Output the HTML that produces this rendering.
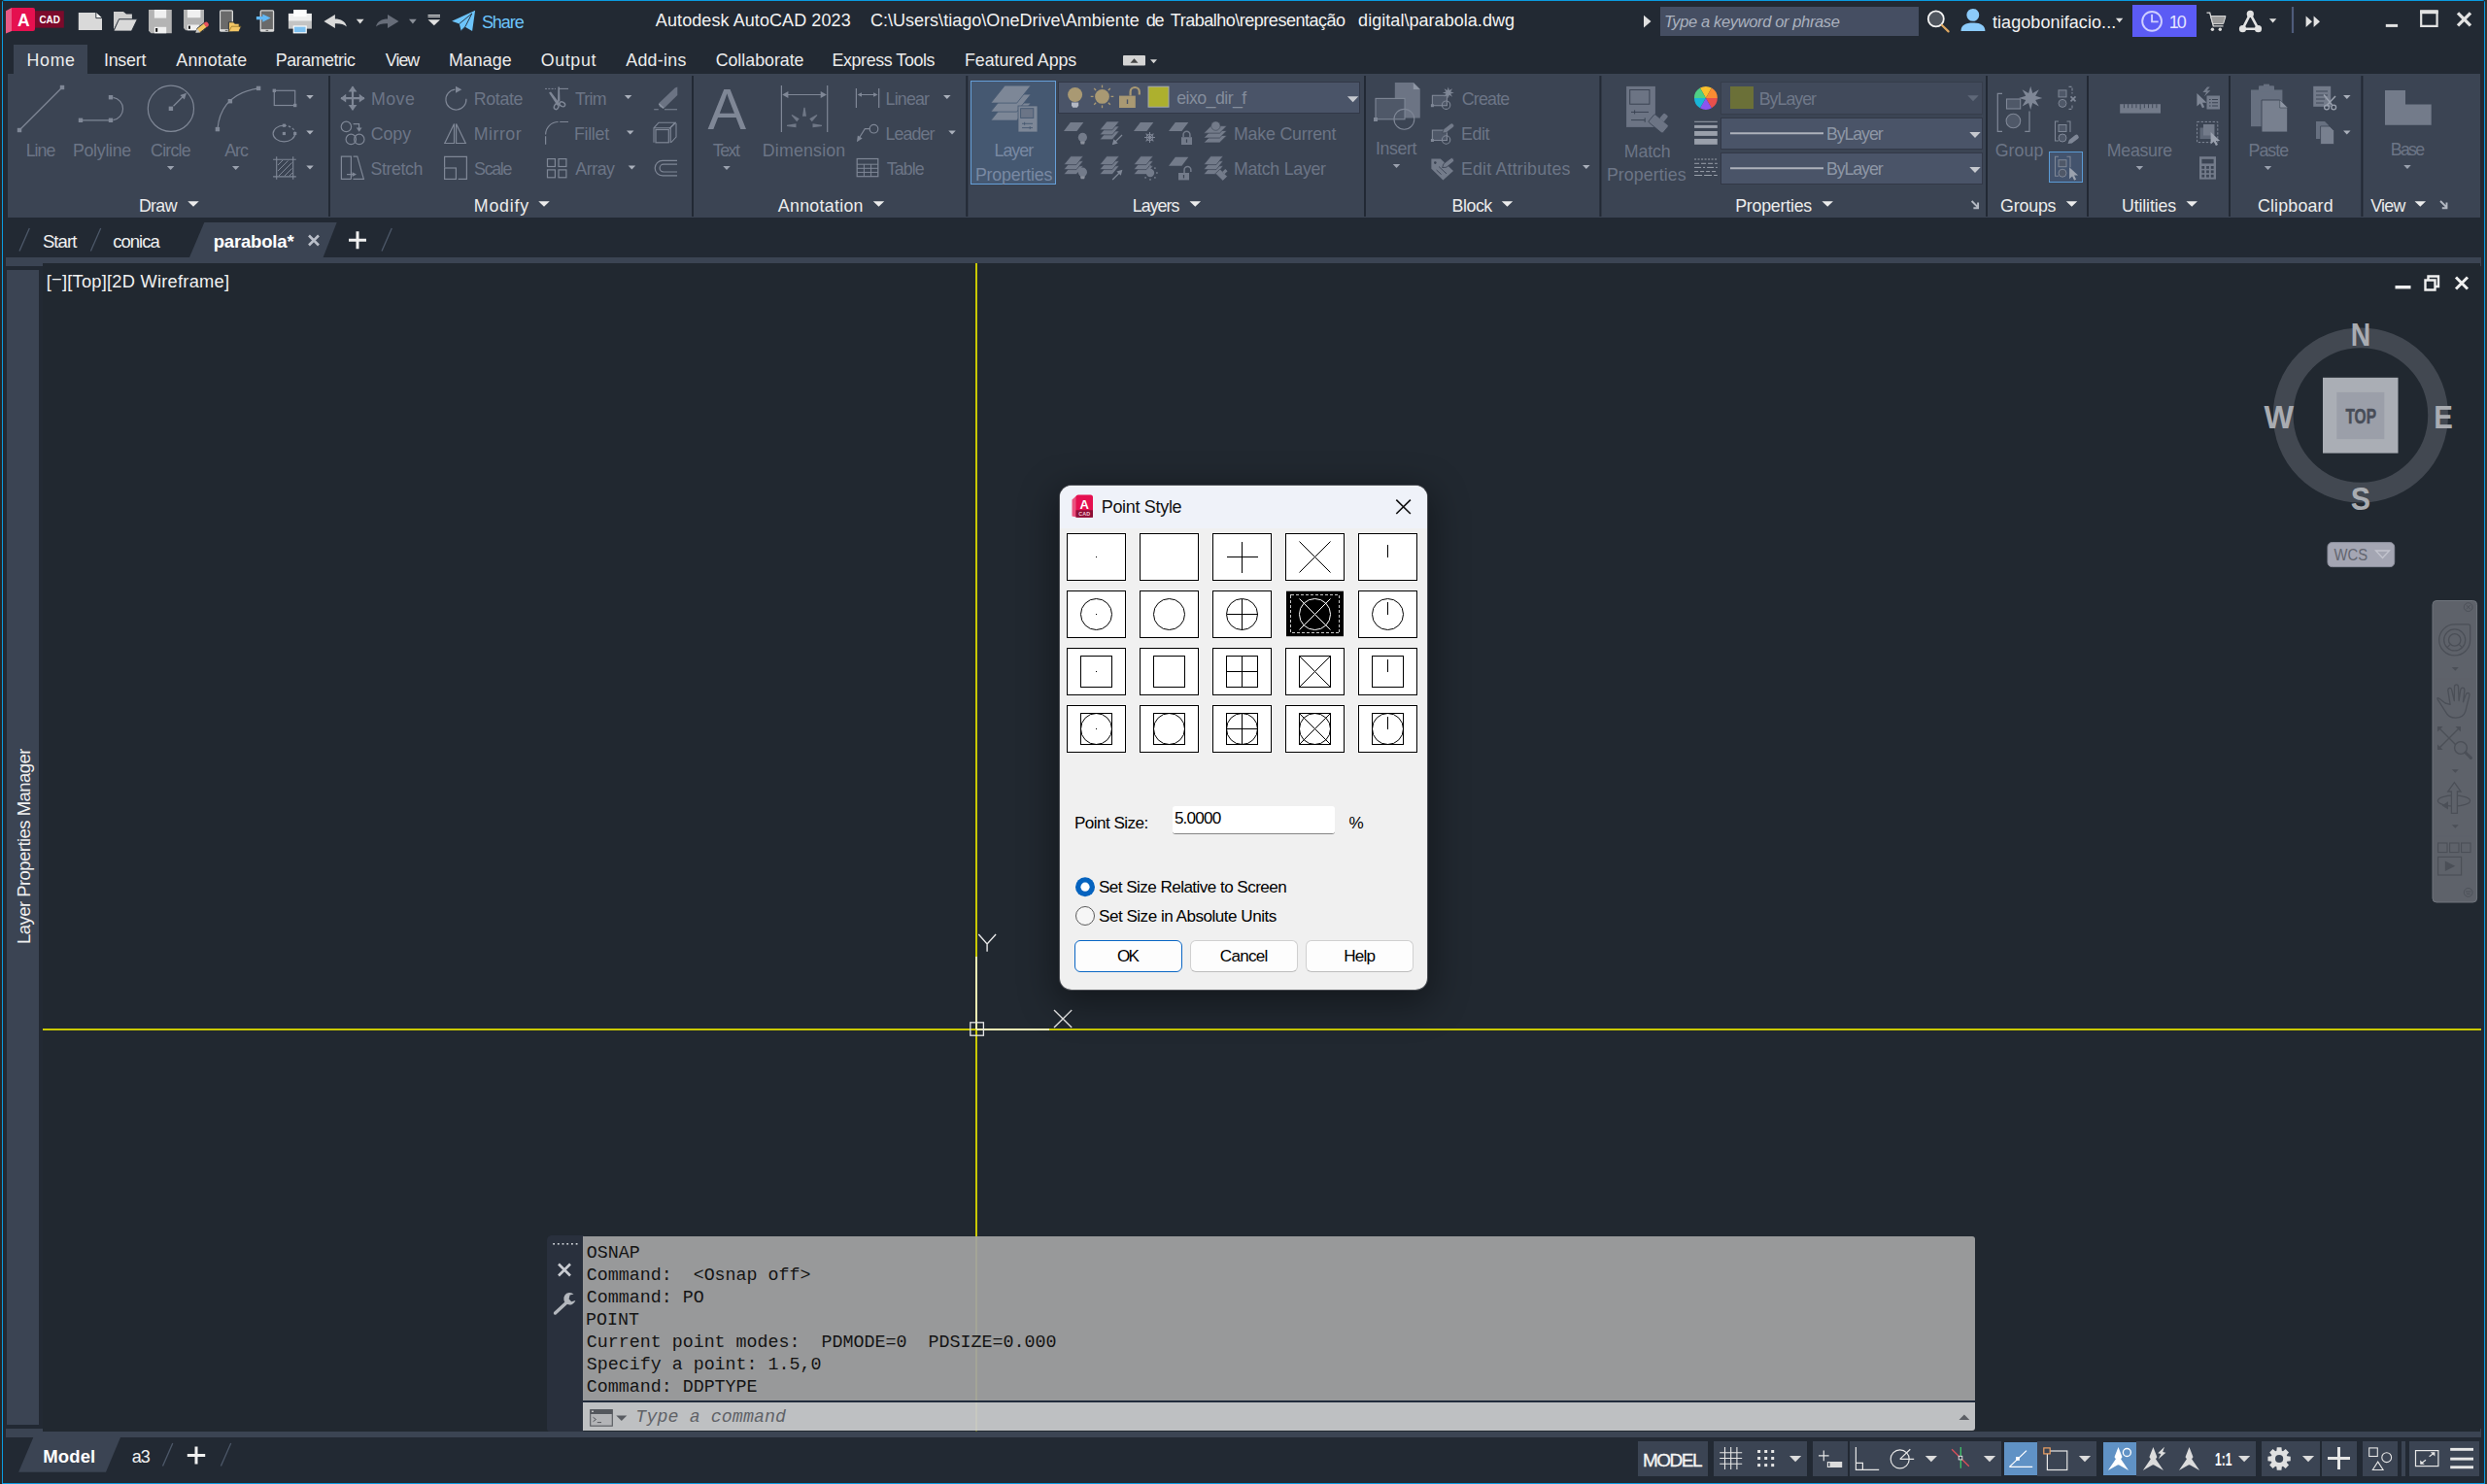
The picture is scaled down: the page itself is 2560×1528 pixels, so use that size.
<!DOCTYPE html>
<html lang="en"><head><meta charset="utf-8"><title>Autodesk AutoCAD 2023 - parabola.dwg</title>
<style>
html,body{margin:0;padding:0;background:#262626;}
body{width:2560px;height:1528px;overflow:hidden;position:relative;font-family:"Liberation Sans",sans-serif;}
#win{position:absolute;left:0;top:0;width:2560px;height:1528px;overflow:hidden;background:#262626;}
#frame{position:absolute;left:1.8px;top:0;width:2556.5px;height:1528px;background:#0a9be0;border-radius:3px 3px 0 0;}
#win:after{content:'';position:absolute;left:2558.3px;top:0;width:2px;height:1528px;background:#38332f;}
.r{position:absolute;}
.t{position:absolute;white-space:nowrap;}
.i{position:absolute;overflow:visible;}
.layer{position:absolute;left:0;top:0;width:2560px;height:1528px;}
svg.full{position:absolute;left:0;top:0;}
.t{z-index:2}
#dialog{z-index:5}
</style></head>
<body>
<div id="win"><div id="frame"></div>
<div class="layer" id="mid">
<div class="r" style="left:3.3px;top:1.2px;width:2553.4px;height:1525.5px;background:#222933;"></div>
<div class="r" style="left:6px;top:265px;width:2548px;height:8.5px;background:#3b4453;"></div>
<div class="r" style="left:6px;top:1471px;width:2548px;height:8.9px;background:#3b4453;"></div>
<div class="r" style="left:44px;top:270.5px;width:2509.4px;height:1203.6px;background:#212830;"></div>
<div class="r" style="left:7px;top:278px;width:33px;height:1189px;background:#3b4453;"></div>
<span class="t" id="t70" style="left:0.00px;top:0px;font-size:18.50px;line-height:18.50px;color:#f0f0f0;transform-origin:0 0;transform:translate(16.2px,972px) rotate(-90deg);left:0;letter-spacing:-0.543px;">Layer Properties Manager</span>
<span class="t" id="t71" style="left:47.69px;top:281.13px;font-size:18.30px;line-height:18.30px;color:#f0f0f0;letter-spacing:0.233px;">[<span style="position:relative;top:-2.2px">−</span>][Top][2D Wireframe]</span>
<svg class="full" width="2560" height="1528" viewBox="0 0 2560 1528">
<rect x="1004" y="271" width="2" height="1202.3" fill="#c9c900"/>
<rect x="44" y="1059" width="2510" height="2" fill="#c9c900"/>
<rect x="1004" y="985" width="2" height="75" fill="#f3f1b4"/>
<rect x="1005" y="1059" width="75" height="2" fill="#f3f1b4"/>
<rect x="998.8" y="1052.8" width="13.6" height="13.4" fill="none" stroke="#e6e6e6" stroke-width="1.3"/>
<path d="M1007.3 962 l8.8 10 l9 -10 M1016.1 972 v7.8" stroke="#e6e6e6" stroke-width="1.4" fill="none"/>
<path d="M1085 1040 l18.2 18 M1103.2 1040 l-18.2 18" stroke="#e6e6e6" stroke-width="1.4" fill="none"/>
<rect x="2465.5" y="294" width="16" height="3.4" fill="#f0f0f0"/>
<path d="M2496.5 288.5 h10 v10 h-10 z M2499.5 288 v-3.5 h10.5 v10.5 h-3.5" fill="none" stroke="#f0f0f0" stroke-width="2.4"/>
<path d="M2528 285.5 l12 12 M2540 285.5 l-12 12" stroke="#f0f0f0" stroke-width="3"/>
<circle cx="2429.9" cy="427.5" r="79.7" fill="none" stroke="#424851" stroke-width="20.8"/>
<rect x="2391" y="388.8" width="77.5" height="77.8" fill="#aaaeb5"/>
<rect x="2405.3" y="403.9" width="49" height="48.2" fill="#9b9fa9"/>
<text x="2430" y="355.9" text-anchor="middle" style="font-family:'Liberation Sans',sans-serif;font-weight:bold;font-size:33px" fill="#a9acb1" textLength="20.5" lengthAdjust="spacingAndGlyphs">N</text>
<text x="2430" y="525.3" text-anchor="middle" style="font-family:'Liberation Sans',sans-serif;font-weight:bold;font-size:32.5px" fill="#a9acb1" textLength="20.3" lengthAdjust="spacingAndGlyphs">S</text>
<text x="2345.8" y="440.6" text-anchor="middle" style="font-family:'Liberation Sans',sans-serif;font-weight:bold;font-size:33px" fill="#a9acb1" textLength="30.6" lengthAdjust="spacingAndGlyphs">W</text>
<text x="2515" y="440.6" text-anchor="middle" style="font-family:'Liberation Sans',sans-serif;font-weight:bold;font-size:33px" fill="#a9acb1" textLength="19.6" lengthAdjust="spacingAndGlyphs">E</text>
<text x="2430.2" y="435.8" text-anchor="middle" style="font-family:'Liberation Sans',sans-serif;font-weight:bold;font-size:21.6px" fill="#484d58" stroke="#484d58" stroke-width="0.5" textLength="31.6" lengthAdjust="spacingAndGlyphs">TOP</text>
<rect x="2396" y="558.6" width="68.7" height="25" rx="4.5" fill="#a4a6b3" stroke="#8e909e" stroke-width="1"/>
<text x="2402.5" y="577" style="font-family:'Liberation Sans',sans-serif;font-size:16px" fill="#62656f" textLength="34.5" lengthAdjust="spacingAndGlyphs">WCS</text>
<path d="M2445.5 567 h14 l-7 7.5 z" fill="none" stroke="#c3c5cf" stroke-width="1.3"/>
<rect x="2504" y="618.5" width="45.6" height="310.5" rx="4" fill="#5e626a" stroke="#70757d" stroke-width="1"/>
<circle cx="2540.7" cy="625.1" r="4.4" fill="#5e626a" stroke="#4b4f57" stroke-width="0.9"/><path d="M2538.6 623 l4.2 4.2 M2542.8 623 l-4.2 4.2" stroke="#4b4f57" stroke-width="0.9"/>
<path d="M2526.7 642.9 h14 a2 2 0 0 1 2 2 v14 a16 16 0 1 1 -16 -16 z" fill="#5e626a" stroke="#4b4f57" stroke-width="1.3"/><circle cx="2526.7" cy="658.9" r="11" fill="none" stroke="#4b4f57" stroke-width="1.3" /><circle cx="2526.7" cy="658.9" r="6.2" fill="none" stroke="#4b4f57" stroke-width="1.3" /><path d="M2522 663.6 l-3.2 3.2 M2531.4 663.6 l3.2 3.2" fill="none" stroke="#4b4f57" stroke-width="1.2" />
<path d="M2523.8 687.1 h7 l-3.5 3.6 z" fill="#4b4f57"/>
<path d="M2523.8 792.2 h7 l-3.5 3.6 z" fill="#4b4f57"/>
<path d="M2523.8 849.2 h7 l-3.5 3.6 z" fill="#4b4f57"/>
<path d="M2507.5 699.3 h38 M2507.5 860.7 h38" stroke="#5e626a" stroke-width="1"/>
<path d="M2517 724 l-6.5 -5 q-2.6 -1 -1 1.6 l8 12.5 q3 6 10 6 q8.4 0 10.4 -7 l4 -16 q0.4 -2.6 -1.6 -2.6 q-1.6 0 -2.4 2.4 l-2.4 7 l1.4 -12.4 q0 -2.4 -2 -2.4 q-1.8 0 -2.2 2.4 l-1.6 11 l-0.6 -14.4 q-0.2 -2.2 -2 -2.2 q-1.9 0 -2 2.2 l-0.2 14.6 l-2.6 -11.4 q-0.6 -2.2 -2.4 -1.8 q-1.8 0.4 -1.4 2.8 l2.2 14 z" fill="#5e626a" stroke="#4b4f57" stroke-width="1.3" stroke-linejoin="round"/>
<path d="M2510 749 l20 20 M2532 749 l-22 22" fill="none" stroke="#4b4f57" stroke-width="1.4" /><path d="M2509 748 h5.6 l-5.6 5.6 z M2533 748 h-5.6 l5.6 5.6 z M2509 772 h5.6 l-5.6 -5.6 z" fill="#4b4f57"/><circle cx="2533" cy="770" r="6.4" fill="#5e626a" stroke="#4b4f57" stroke-width="1.4"/><path d="M2538 775 l5.4 5.4" stroke="#4b4f57" stroke-width="3" stroke-linecap="round"/>
<ellipse cx="2526" cy="824.5" rx="16.6" ry="5.6" fill="none" stroke="#4b4f57" stroke-width="1.3" /><path d="M2523.4 837.4 v-22.4 h-3.6 l6.6 -9.4 l6.6 9.4 h-3.6 v22.4 z" fill="#5e626a" stroke="#4b4f57" stroke-width="1.3"/><path d="M2513.6 829.6 l6.4 -4.4 v8.4 z" fill="#4b4f57"/>
<rect x="2509.6" y="868" width="9.4" height="9.6" fill="#5e626a" stroke="#4b4f57" stroke-width="1.1"/>
<rect x="2521.6" y="868" width="9.4" height="9.6" fill="#5e626a" stroke="#4b4f57" stroke-width="1.1"/>
<rect x="2533.6" y="868" width="9.4" height="9.6" fill="#5e626a" stroke="#4b4f57" stroke-width="1.1"/>
<rect x="2509.6" y="882.4" width="24" height="18.6" fill="#5e626a" stroke="#4b4f57" stroke-width="1.2"/><path d="M2516.8 886.6 v10.4 l10.4 -5.2 z" fill="#4b4f57"/>
<circle cx="2540.7" cy="918.9" r="4.4" fill="#5e626a" stroke="#4b4f57" stroke-width="0.9"/><path d="M2538 918 h5.4 M2538.8 920.4 h3.8" stroke="#4b4f57" stroke-width="0.9"/>
</svg>
</div>
<div class="layer" id="top">
<div class="r" style="left:3.3px;top:1.2px;width:2553.4px;height:74.8px;background:#222933;"></div>
<div class="r" style="left:14px;top:46px;width:76px;height:31px;background:#3b4453;"></div>
<div class="r" style="left:8px;top:76px;width:2545.3px;height:148px;background:#3b4453;"></div>
<div class="r" style="left:3.3px;top:224px;width:2553.4px;height:41px;background:#222933;"></div>
<span class="t" id="t1" style="left:495.89px;top:14.12px;font-size:18.00px;line-height:18.00px;color:#6cc4fb;letter-spacing:-1.024px;">Share</span>
<span class="t" id="t2" style="left:674.86px;top:12.13px;font-size:18.00px;line-height:18.00px;color:#f2f2f2;letter-spacing:0.083px;">Autodesk AutoCAD 2023</span>
<span class="t" id="t3" style="left:895.89px;top:12.13px;font-size:18.00px;line-height:18.00px;color:#f2f2f2;letter-spacing:0.029px;">C:\Users\tiago\OneDrive\Ambiente</span>
<span class="t" id="t4" style="left:1179.69px;top:12.13px;font-size:18.00px;line-height:18.00px;color:#f2f2f2;letter-spacing:-1.090px;">de</span>
<span class="t" id="t5" style="left:1204.81px;top:12.13px;font-size:18.00px;line-height:18.00px;color:#f2f2f2;letter-spacing:-0.486px;">Trabalho\representação</span>
<span class="t" id="t6" style="left:1398.10px;top:12.13px;font-size:18.00px;line-height:18.00px;color:#f2f2f2;letter-spacing:0.042px;">digital\parabola.dwg</span>
<div class="r" style="left:1709px;top:7px;width:266px;height:29.5px;background:#454e62;"></div>
<span class="t" id="t7" style="left:1712.89px;top:14.14px;font-size:16.50px;line-height:16.50px;color:#aab1be;font-style:italic;letter-spacing:-0.369px;">Type a keyword or phrase</span>
<span class="t" id="t8" style="left:2050.97px;top:14.13px;font-size:18.00px;line-height:18.00px;color:#f2f2f2;letter-spacing:0.074px;">tiagobonifacio...</span>
<div class="r" style="left:2195px;top:5.2px;width:65.8px;height:32.8px;background:#5b5bf5;"></div>
<span class="t" id="t9" style="left:2232.84px;top:14.13px;font-size:18.00px;line-height:18.00px;color:#e4e4ff;letter-spacing:-2.043px;">10</span>
<span class="t" id="t10" style="left:27.62px;top:54.13px;font-size:17.80px;line-height:17.80px;color:#ececec;letter-spacing:0.656px;">Home</span>
<span class="t" id="t11" style="left:106.89px;top:54.13px;font-size:17.80px;line-height:17.80px;color:#ececec;letter-spacing:-0.180px;">Insert</span>
<span class="t" id="t12" style="left:181.32px;top:54.13px;font-size:17.80px;line-height:17.80px;color:#ececec;letter-spacing:0.238px;">Annotate</span>
<span class="t" id="t13" style="left:283.74px;top:54.13px;font-size:17.80px;line-height:17.80px;color:#ececec;letter-spacing:-0.412px;">Parametric</span>
<span class="t" id="t14" style="left:396.81px;top:54.13px;font-size:17.80px;line-height:17.80px;color:#ececec;letter-spacing:-0.941px;">View</span>
<span class="t" id="t15" style="left:461.89px;top:54.13px;font-size:17.80px;line-height:17.80px;color:#ececec;letter-spacing:0.120px;">Manage</span>
<span class="t" id="t16" style="left:556.73px;top:54.13px;font-size:17.80px;line-height:17.80px;color:#ececec;letter-spacing:0.652px;">Output</span>
<span class="t" id="t17" style="left:644.32px;top:54.13px;font-size:17.80px;line-height:17.80px;color:#ececec;letter-spacing:0.278px;">Add-ins</span>
<span class="t" id="t18" style="left:736.65px;top:54.13px;font-size:17.80px;line-height:17.80px;color:#ececec;letter-spacing:-0.007px;">Collaborate</span>
<span class="t" id="t19" style="left:856.62px;top:54.13px;font-size:17.80px;line-height:17.80px;color:#ececec;letter-spacing:-0.386px;">Express Tools</span>
<span class="t" id="t20" style="left:992.95px;top:54.13px;font-size:17.80px;line-height:17.80px;color:#ececec;letter-spacing:-0.029px;">Featured Apps</span>
<span class="t" id="t21" style="left:142.89px;top:204.13px;font-size:17.80px;line-height:17.80px;color:#ececec;letter-spacing:-0.633px;">Draw</span>
<span class="t" id="t22" style="left:487.83px;top:204.13px;font-size:17.80px;line-height:17.80px;color:#ececec;letter-spacing:0.783px;">Modify</span>
<span class="t" id="t23" style="left:800.86px;top:204.13px;font-size:17.80px;line-height:17.80px;color:#ececec;letter-spacing:0.292px;">Annotation</span>
<span class="t" id="t24" style="left:1165.74px;top:204.13px;font-size:17.80px;line-height:17.80px;color:#ececec;letter-spacing:-0.930px;">Layers</span>
<span class="t" id="t25" style="left:1494.62px;top:204.13px;font-size:17.80px;line-height:17.80px;color:#ececec;letter-spacing:-0.458px;">Block</span>
<span class="t" id="t26" style="left:1786.14px;top:204.13px;font-size:17.80px;line-height:17.80px;color:#ececec;letter-spacing:-0.217px;">Properties</span>
<span class="t" id="t27" style="left:2059.10px;top:204.13px;font-size:17.80px;line-height:17.80px;color:#ececec;letter-spacing:-0.180px;">Groups</span>
<span class="t" id="t28" style="left:2184.05px;top:204.13px;font-size:17.80px;line-height:17.80px;color:#ececec;letter-spacing:-0.156px;">Utilities</span>
<span class="t" id="t29" style="left:2323.89px;top:204.13px;font-size:17.80px;line-height:17.80px;color:#ececec;letter-spacing:0.200px;">Clipboard</span>
<span class="t" id="t30" style="left:2440.29px;top:204.13px;font-size:17.80px;line-height:17.80px;color:#ececec;letter-spacing:-0.711px;">View</span>
<span class="t" id="t31" style="left:26.74px;top:147.13px;font-size:17.80px;line-height:17.80px;color:#6c7586;letter-spacing:-1.016px;">Line</span>
<span class="t" id="t32" style="left:74.89px;top:147.13px;font-size:17.80px;line-height:17.80px;color:#6c7586;letter-spacing:-0.271px;">Polyline</span>
<span class="t" id="t33" style="left:155.10px;top:147.13px;font-size:17.80px;line-height:17.80px;color:#6c7586;letter-spacing:-0.800px;">Circle</span>
<span class="t" id="t34" style="left:231.32px;top:147.13px;font-size:17.80px;line-height:17.80px;color:#6c7586;letter-spacing:-1.097px;">Arc</span>
<span class="t" id="t35" style="left:381.89px;top:94.13px;font-size:17.80px;line-height:17.80px;color:#6c7586;letter-spacing:0.500px;">Move</span>
<span class="t" id="t36" style="left:381.65px;top:130.13px;font-size:17.80px;line-height:17.80px;color:#6c7586;letter-spacing:-0.021px;">Copy</span>
<span class="t" id="t37" style="left:381.51px;top:166.13px;font-size:17.80px;line-height:17.80px;color:#6c7586;letter-spacing:-0.420px;">Stretch</span>
<span class="t" id="t38" style="left:487.83px;top:94.13px;font-size:17.80px;line-height:17.80px;color:#6c7586;letter-spacing:-0.346px;">Rotate</span>
<span class="t" id="t39" style="left:487.83px;top:130.13px;font-size:17.80px;line-height:17.80px;color:#6c7586;letter-spacing:0.472px;">Mirror</span>
<span class="t" id="t40" style="left:488.10px;top:166.13px;font-size:17.80px;line-height:17.80px;color:#6c7586;letter-spacing:-1.300px;">Scale</span>
<span class="t" id="t41" style="left:591.89px;top:94.13px;font-size:17.80px;line-height:17.80px;color:#6c7586;letter-spacing:-0.771px;">Trim</span>
<span class="t" id="t42" style="left:590.89px;top:130.13px;font-size:17.80px;line-height:17.80px;color:#6c7586;letter-spacing:-0.260px;">Fillet</span>
<span class="t" id="t43" style="left:592.32px;top:166.13px;font-size:17.80px;line-height:17.80px;color:#6c7586;letter-spacing:-0.458px;">Array</span>
<span class="t" id="t44" style="left:733.81px;top:147.13px;font-size:17.80px;line-height:17.80px;color:#6c7586;letter-spacing:-1.512px;">Text</span>
<span class="t" id="t45" style="left:784.83px;top:147.13px;font-size:17.80px;line-height:17.80px;color:#6c7586;letter-spacing:0.171px;">Dimension</span>
<span class="t" id="t46" style="left:911.62px;top:94.13px;font-size:17.80px;line-height:17.80px;color:#6c7586;letter-spacing:-0.808px;">Linear</span>
<span class="t" id="t47" style="left:911.62px;top:130.13px;font-size:17.80px;line-height:17.80px;color:#6c7586;letter-spacing:-0.908px;">Leader</span>
<span class="t" id="t48" style="left:912.68px;top:166.13px;font-size:17.80px;line-height:17.80px;color:#6c7586;letter-spacing:-0.898px;">Table</span>
<span class="t" id="t49" style="left:1269.95px;top:130.13px;font-size:17.80px;line-height:17.80px;color:#6c7586;letter-spacing:-0.195px;">Make Current</span>
<span class="t" id="t50" style="left:1269.95px;top:166.13px;font-size:17.80px;line-height:17.80px;color:#6c7586;letter-spacing:-0.275px;">Match Layer</span>
<span class="t" id="t51" style="left:1415.89px;top:145.13px;font-size:17.80px;line-height:17.80px;color:#6c7586;letter-spacing:-0.380px;">Insert</span>
<span class="t" id="t52" style="left:1504.65px;top:94.13px;font-size:17.80px;line-height:17.80px;color:#6c7586;letter-spacing:-0.753px;">Create</span>
<span class="t" id="t53" style="left:1503.89px;top:130.14px;font-size:17.80px;line-height:17.80px;color:#6c7586;letter-spacing:-0.333px;">Edit</span>
<span class="t" id="t54" style="left:1503.89px;top:166.13px;font-size:17.80px;line-height:17.80px;color:#6c7586;letter-spacing:0.199px;">Edit Attributes</span>
<span class="t" id="t55" style="left:1671.83px;top:148.13px;font-size:17.80px;line-height:17.80px;color:#6c7586;letter-spacing:-0.165px;">Match</span>
<span class="t" id="t56" style="left:1653.89px;top:172.13px;font-size:17.80px;line-height:17.80px;color:#6c7586;letter-spacing:0.067px;">Properties</span>
<span class="t" id="t57" style="left:2053.68px;top:147.13px;font-size:17.80px;line-height:17.80px;color:#6c7586;letter-spacing:0.099px;">Group</span>
<span class="t" id="t58" style="left:2168.83px;top:147.13px;font-size:17.80px;line-height:17.80px;color:#6c7586;letter-spacing:-0.307px;">Measure</span>
<span class="t" id="t59" style="left:2314.62px;top:147.13px;font-size:17.80px;line-height:17.80px;color:#6c7586;letter-spacing:-1.008px;">Paste</span>
<span class="t" id="t60" style="left:2460.74px;top:146.13px;font-size:17.80px;line-height:17.80px;color:#6c7586;letter-spacing:-1.683px;">Base</span>
<div class="r" style="left:998.6px;top:82.6px;width:88.4px;height:107.2px;background:#455871;border:1.4px solid #669fd8;box-sizing:border-box;"></div>
<span class="t" id="t61" style="left:1023.62px;top:147.13px;font-size:17.80px;line-height:17.80px;color:#7989a3;letter-spacing:-1.010px;">Layer</span>
<span class="t" id="t62" style="left:1003.89px;top:172.13px;font-size:17.80px;line-height:17.80px;color:#7989a3;letter-spacing:-0.167px;">Properties</span>
<div class="r" style="left:1089.4px;top:83.8px;width:311px;height:33.6px;background:#4a5468;border:1.8px solid #323847;box-sizing:border-box;"></div>
<span class="t" id="t63" style="left:1211.17px;top:93.12px;font-size:17.80px;line-height:17.80px;color:#848d9c;letter-spacing:-0.553px;">eixo_dir_f</span>
<div class="r" style="left:1771.2px;top:83.8px;width:269.6px;height:34px;background:#414a5b;border:1.6px solid #363d4b;box-sizing:border-box;"></div>
<div class="r" style="left:1771.2px;top:120.6px;width:269.6px;height:33.4px;background:#4a5468;border:1.8px solid #323847;box-sizing:border-box;"></div>
<div class="r" style="left:1771.2px;top:156.6px;width:269.6px;height:33.4px;background:#4a5468;border:1.8px solid #323847;box-sizing:border-box;"></div>
<span class="t" id="t64" style="left:1810.74px;top:94.13px;font-size:17.80px;line-height:17.80px;color:#6f7889;letter-spacing:-0.994px;">ByLayer</span>
<span class="t" id="t65" style="left:1879.95px;top:130.13px;font-size:17.80px;line-height:17.80px;color:#8d96a5;letter-spacing:-1.094px;">ByLayer</span>
<span class="t" id="t66" style="left:1879.95px;top:166.13px;font-size:17.80px;line-height:17.80px;color:#8d96a5;letter-spacing:-1.094px;">ByLayer</span>
<div class="r" style="left:2109px;top:156px;width:34.6px;height:32px;background:#43536d;border:1.5px solid #5b9bd5;box-sizing:border-box;"></div>
<span class="t" id="t67" style="left:43.89px;top:240.13px;font-size:18.50px;line-height:18.50px;color:#f0f0f0;letter-spacing:-0.875px;">Start</span>
<span class="t" id="t68" style="left:116.29px;top:240.13px;font-size:18.50px;line-height:18.50px;color:#f0f0f0;letter-spacing:-0.998px;">conica</span>
<span class="t" id="t69" style="left:219.69px;top:240.13px;font-size:18.50px;line-height:18.50px;color:#ffffff;font-weight:bold;letter-spacing:-0.175px;">parabola*</span>
<svg class="full" width="2560" height="1528" viewBox="0 0 2560 1528">
<rect x="338" y="78" width="2" height="145" fill="#222934"/>
<rect x="712" y="78" width="2" height="145" fill="#222934"/>
<rect x="994.3" y="78" width="2" height="145" fill="#222934"/>
<rect x="1404" y="78" width="2" height="145" fill="#222934"/>
<rect x="1646.4" y="78" width="2" height="145" fill="#222934"/>
<rect x="2044" y="78" width="2" height="145" fill="#222934"/>
<rect x="2148" y="78" width="2" height="145" fill="#222934"/>
<rect x="2294" y="78" width="2" height="145" fill="#222934"/>
<rect x="2430.4" y="78" width="2" height="145" fill="#222934"/>
<path d="M193.25 207.25 h11.5 l-5.75 5.5 z" fill="#ececec"/>
<path d="M554.25 207.25 h11.5 l-5.75 5.5 z" fill="#ececec"/>
<path d="M898.75 207.25 h11.5 l-5.75 5.5 z" fill="#ececec"/>
<path d="M1224.55 207.25 h11.5 l-5.75 5.5 z" fill="#ececec"/>
<path d="M1545.75 207.25 h11.5 l-5.75 5.5 z" fill="#ececec"/>
<path d="M1875.45 207.25 h11.5 l-5.75 5.5 z" fill="#ececec"/>
<path d="M2126.75 207.25 h11.5 l-5.75 5.5 z" fill="#ececec"/>
<path d="M2250.45 207.25 h11.5 l-5.75 5.5 z" fill="#ececec"/>
<path d="M2485.55 207.25 h11.5 l-5.75 5.5 z" fill="#ececec"/>
<path d="M2029.6 207 l6.4 6.4 M2037 214.2 h-5.6 M2036.1 214.2 v-5.6" stroke="#b4b9c3" stroke-width="1.9" fill="none"/>
<path d="M2512 207 l6.4 6.4 M2519.4 214.2 h-5.6 M2518.5 214.2 v-5.6" stroke="#b4b9c3" stroke-width="1.9" fill="none"/>
<path d="M171.85 171 h7.5 l-3.75 4 z" fill="#9aa1ae"/>
<path d="M238.95 171 h7.5 l-3.75 4 z" fill="#9aa1ae"/>
<path d="M744.25 171 h7.5 l-3.75 4 z" fill="#9aa1ae"/>
<path d="M1433.75 169 h7.5 l-3.75 4 z" fill="#9aa1ae"/>
<path d="M2198.65 171 h7.5 l-3.75 4 z" fill="#9aa1ae"/>
<path d="M2330.75 171 h7.5 l-3.75 4 z" fill="#9aa1ae"/>
<path d="M2474.25 170 h7.5 l-3.75 4 z" fill="#9aa1ae"/>
<path d="M315.25 98 h7.5 l-3.75 4 z" fill="#aab0bb"/>
<path d="M315.25 134.5 h7.5 l-3.75 4 z" fill="#aab0bb"/>
<path d="M315.25 170.5 h7.5 l-3.75 4 z" fill="#aab0bb"/>
<path d="M642.85 98 h7.5 l-3.75 4 z" fill="#aab0bb"/>
<path d="M644.95 134.5 h7.5 l-3.75 4 z" fill="#aab0bb"/>
<path d="M646.65 170.5 h7.5 l-3.75 4 z" fill="#aab0bb"/>
<path d="M971.05 98 h7.5 l-3.75 4 z" fill="#aab0bb"/>
<path d="M976.25 134.5 h7.5 l-3.75 4 z" fill="#aab0bb"/>
<path d="M1629.05 170 h7.5 l-3.75 4 z" fill="#aab0bb"/>
<path d="M2412.05 98 h7.5 l-3.75 4 z" fill="#aab0bb"/>
<path d="M2412.05 134.5 h7.5 l-3.75 4 z" fill="#aab0bb"/>
<path d="M1386.9 99.2 h11.4 l-5.7 6 z" fill="#c6c9cf"/>
<rect x="1182" y="89" width="21" height="21" fill="#adb02e"/>
<rect x="1781" y="89" width="24" height="23" fill="#6b7038"/>
<path d="M1781 137.2 h96 M1781 173.2 h96" stroke="#adb1ba" stroke-width="1.9"/>
<path d="M2025.3 98.2 h11.4 l-5.7 6 z" fill="#5f6878"/>
<path d="M2027.3 136 h11.4 l-5.7 6 z" fill="#c6c9cf"/>
<path d="M2027.3 172 h11.4 l-5.7 6 z" fill="#c6c9cf"/>
<polygon points="195,265 210.3,229 346.7,229 332.6,265" fill="#3b4453"/>
<path d="M20 258.5 l10.3 -23.5" stroke="#4d5869" stroke-width="1.3"/>
<path d="M93.4 258.5 l10.3 -23.5" stroke="#4d5869" stroke-width="1.3"/>
<path d="M393 258.5 l10.3 -23.5" stroke="#4d5869" stroke-width="1.3"/>
<path d="M318 242.5 l10 10 M328 242.5 l-10 10" stroke="#b9bec8" stroke-width="2.6"/>
<path d="M359 247.2 h18 M368 238.2 v18" stroke="#f0f0f0" stroke-width="3"/>
<polygon points="12,8 6,11.3 6,34.6 12,32" fill="#ea5a86"/>
<path d="M12 8 h22 a2 2 0 0 1 2 2 v20 a2 2 0 0 1 -2 2 h-22 z" fill="#e5104f"/>
<rect x="36" y="11.2" width="29.8" height="17.4" fill="#7c0a2b"/>
<text x="24.3" y="26.9" text-anchor="middle" style="font-family:'Liberation Sans',sans-serif;font-weight:bold;font-size:19.2px" fill="#fff" textLength="12.6" lengthAdjust="spacingAndGlyphs">A</text>
<text x="40.4" y="24" style="font-family:'Liberation Sans',sans-serif;font-weight:bold;font-size:11px" fill="#fff" textLength="21.4" lengthAdjust="spacingAndGlyphs">CAD</text>
<path d="M80.8 12.9 h18 l6.2 5.7 v12.4 h-24.2 z" fill="#d9d9d9"/>
<path d="M98.8 12.9 v5.7 h6.2" fill="#f4f4f4" stroke="#222933" stroke-width="0.9"/>
<path d="M117 12 h10 l3 2.6 h5.9 v5 h-13.5 l-5.4 11 z" fill="#cfcfcf"/>
<path d="M122.5 19.8 h18.8 l-5.9 12.2 h-18.4 z" fill="#d9d9d9" stroke="#222933" stroke-width="0.8"/>
<path d="M153 10 h23.8 v24.3 h-21.3 l-2.5 -2.5 z" fill="#b4b4b4"/>
<rect x="158.9" y="10" width="12.3" height="8.6" fill="#f0f0f0"/>
<rect x="158.9" y="27.8" width="12.3" height="6.5" fill="#f0f0f0"/>
<rect x="160.2" y="29" width="2" height="3.8" fill="#111"/>
<path d="M189 10 h21 v21.3 h-18.8 l-2.2 -2.2 z" fill="#b4b4b4"/>
<rect x="192.9" y="10" width="13.5" height="8.2" fill="#f0f0f0"/>
<rect x="192.9" y="25.5" width="12" height="5.8" fill="#f0f0f0"/>
<rect x="194" y="26.6" width="1.9" height="3.2" fill="#111"/>
<g transform="translate(201.3,33.8) rotate(-38)"><path d="M0 0 l4 -2.6 h9 v5.2 h-9 z" fill="#f3c561" stroke="#222933" stroke-width="0.8"/><path d="M0 0 l4 -2.6 v5.2 z" fill="#c8c8c8"/><path d="M12.4 -2.6 h1.5 a2.4 2.6 0 0 1 0 5.2 h-1.5 z" fill="#e8525c"/></g>
<rect x="226" y="10.3" width="14" height="22.5" rx="1.6" fill="#d9d9d9"/>
<rect x="227.1" y="11.5" width="11.6" height="18.6" fill="#6a6a6a"/>
<rect x="231.8" y="30.9" width="2.6" height="0.9" fill="#555"/>
<path d="M235.4 22.8 h5 l1.2 1.4 h4.6 v3 h2.2 l-2.6 5.6 h-10.4 z" fill="#f4c765" stroke="#222933" stroke-width="0.9"/>
<path d="M235.6 32.6 l2.8 -5.4 h9.8" fill="none" stroke="#8a6a20" stroke-width="0.7"/>
<rect x="267.6" y="10.3" width="14.6" height="22.5" rx="1.6" fill="#d9d9d9"/>
<rect x="268.9" y="11.5" width="12" height="18.6" fill="#6a6a6a"/>
<rect x="273.6" y="30.9" width="2.6" height="0.9" fill="#555"/>
<path d="M263.9 17 h6.4 v-2.6 l8.3 4.2 l-8.3 4.2 v-2.6 h-6.4 z" fill="#62b8f6"/>
<rect x="302.1" y="10" width="13.6" height="7.5" fill="#fdfdfd"/>
<rect x="296.9" y="13.9" width="24" height="8" fill="#efefef"/>
<rect x="302.1" y="13.9" width="13.6" height="3.2" fill="#fdfdfd"/>
<rect x="296.9" y="21.9" width="24" height="7.7" fill="#c4c4c4"/>
<rect x="302.3" y="27" width="12.9" height="6.8" fill="#7ec1f1" stroke="#fdfdfd" stroke-width="1.2"/>
<path d="M333.4 22 l11.5 -7 v4.6 c6 0 10.6 2.4 12 7.9 c-3 -2.8 -6.6 -3.5 -12 -3.3 v4.9 z" fill="#dadada"/>
<path d="M366.8 19.8 h7.8 l-3.9 4.6 z" fill="#dadada"/>
<path d="M410.5 22 l-11.5 -7 v4.6 c-6 0 -10.6 2.4 -12 7.9 c3 -2.8 6.6 -3.5 12 -3.3 v4.9 z" fill="#676d79"/>
<path d="M421 19.8 h7.8 l-3.9 4.6 z" fill="#8a8f98"/>
<rect x="440.5" y="15" width="12.5" height="0.9" fill="#e6e6e6"/><rect x="440.5" y="16.7" width="12.5" height="1.1" fill="#e6e6e6"/>
<path d="M440.55 20.2 h12.5 l-6.25 6 z" fill="#e0e0e0"/>
<path d="M465.1 21.8 l24 -11 l-3 21.2 l-7.3 -4.3 l-4.1 4 l-1.9 -7.2 z" fill="#6cc4fb"/>
<path d="M472.8 24.5 l13 -10.6 M478.8 27.7 l7 -13.8 M474.7 31.7 l4.1 -4" stroke="#222933" stroke-width="0.9" fill="none"/>
<path d="M1692 15.8 l7.5 6.3 l-7.5 6.3 z" fill="#e0e0e0"/>
<circle cx="1992.8" cy="19.4" r="8" fill="#50565f" stroke="#f4f4f4" stroke-width="1.8"/>
<path d="M1999 26 l6.6 6.4" stroke="#dfa862" stroke-width="2.2" stroke-linecap="round"/>
<circle cx="2030.8" cy="15.4" r="6.4" fill="#8ccbfa"/>
<path d="M2018.5 31.9 c0 -6 5 -8.4 12.4 -8.4 s12.5 2.4 12.5 8.4 z" fill="#8ccbfa"/>
<path d="M2177.9 18.8 h7.4 l-3.7 4.4 z" fill="#e0e0e0"/>
<circle cx="2215.1" cy="21.9" r="9.9" fill="none" stroke="#cfcfff" stroke-width="1.9"/>
<path d="M2215.1 14.8 v7.6 h6.6" fill="none" stroke="#cfcfff" stroke-width="1.9"/>
<path d="M2271.5 13.2 h3.2 l3.6 13.6 h10.2" fill="none" stroke="#dcdcdc" stroke-width="1.3"/>
<path d="M2275.6 16.6 h15.4 l-2.4 8 h-10.8 z" fill="#9b9b9b" stroke="#dcdcdc" stroke-width="1"/>
<circle cx="2277.4" cy="30.3" r="1.7" fill="#dcdcdc"/><circle cx="2285.3" cy="30.3" r="1.7" fill="#dcdcdc"/>
<path d="M2316.3 14.4 L2308.5 29.7 H2324.5 Z" fill="none" stroke="#e2e2e2" stroke-width="2.6" stroke-linejoin="round"/>
<circle cx="2316.3" cy="14.4" r="3.6" fill="#e2e2e2"/>
<circle cx="2308.5" cy="29.7" r="3.6" fill="#e2e2e2"/>
<circle cx="2324.5" cy="29.7" r="3.6" fill="#e2e2e2"/>
<path d="M2335.9 19.2 h7.4 l-3.7 4.4 z" fill="#e0e0e0"/>
<rect x="2358.9" y="7" width="2.2" height="27" fill="#4e5b7a"/>
<path d="M2373.6 16.5 l6.4 5.7 l-6.4 5.7 z M2381.6 16.5 l6.4 5.7 l-6.4 5.7 z" fill="#e2e2e2"/>
<rect x="2455.8" y="24.9" width="12.3" height="3" fill="#e2e2e2"/>
<path d="M2492.2 12 h16.4 v14.8 h-16.4 z" fill="none" stroke="#e2e2e2" stroke-width="2.2"/><rect x="2491.1" y="10.2" width="18.6" height="4" fill="#e2e2e2"/>
<path d="M2530 13.4 l13 13 M2543 13.4 l-13 13" stroke="#e2e2e2" stroke-width="3.3"/>
<rect x="1156" y="57" width="23" height="10.4" rx="1" fill="#d4d4d4"/><path d="M1163.5 64.8 l4 -4.6 l4 4.6 z" fill="#444"/>
<path d="M1184 61.3 h7 l-3.5 4 z" fill="#d4d4d4"/>
<path d="M20 134 L64 90" fill="none" stroke="#7f8796" stroke-width="1.2" />
<rect x="17.8" y="131.8" width="4.4" height="4.4" fill="#7f8796"/>
<rect x="61.8" y="87.8" width="4.4" height="4.4" fill="#7f8796"/>
<path d="M83 123.8 H114 M116.5 123.6 a12.3 11.8 0 0 0 0 -23.2" fill="none" stroke="#7f8796" stroke-width="1.2" />
<rect x="80.8" y="121.6" width="4.4" height="4.4" fill="#7f8796"/>
<rect x="111.8" y="121.6" width="4.4" height="4.4" fill="#7f8796"/>
<rect x="111.8" y="98" width="4.4" height="4.4" fill="#7f8796"/>
<circle cx="175.9" cy="111.8" r="23.6" fill="none" stroke="#7f8796" stroke-width="1.2" />
<rect x="173.7" y="109.6" width="4.4" height="4.4" fill="#7f8796"/>
<path d="M178.5 109.2 L188.5 99.3" fill="none" stroke="#7f8796" stroke-width="1.2" /><path d="M192 95.8 l-6.6 2.2 l4.4 4.4 z" fill="#7f8796"/>
<path d="M223.9 133.1 Q227 97 266.1 90.9" fill="none" stroke="#7f8796" stroke-width="1.2" />
<rect x="221.7" y="130.9" width="4.4" height="4.4" fill="#7f8796"/>
<rect x="234.7" y="102" width="4.4" height="4.4" fill="#7f8796"/>
<rect x="263.9" y="88.7" width="4.4" height="4.4" fill="#7f8796"/>
<rect x="282.3" y="93.3" width="21.4" height="15.2" fill="none" stroke="#7f8796" stroke-width="1.2" />
<rect x="280.6" y="91.6" width="3.4" height="3.4" fill="#7f8796"/>
<rect x="302" y="106.8" width="3.4" height="3.4" fill="#7f8796"/>
<path d="M303.7 137.5 a11.3 8.3 0 1 1 -11.3 -8.3" fill="none" stroke="#7f8796" stroke-width="1.2" /><path d="M292.4 129.2 a11.3 8.3 0 0 1 11.3 8.3" fill="none" stroke="#7f8796" stroke-width="1.2" stroke-dasharray="2.5 2"/>
<rect x="290.8" y="127.6" width="3.2" height="3.2" fill="#7f8796"/>
<rect x="290.8" y="135.9" width="3.2" height="3.2" fill="#7f8796"/>
<rect x="302.1" y="135.9" width="3.2" height="3.2" fill="#7f8796"/>
<path d="M284.7 161.2 V184.8 M301.7 161.2 V184.8 M281.1 164.3 H304.8 M281.1 181.9 H304.8" fill="none" stroke="#7f8796" stroke-width="1.1" />
<path d="M286 170 l5 -5 M286 176 l10.5 -10.5 M287 181 l13.5 -13.5 M293 181 l7.5 -7.5 M298 181 l3 -3" fill="none" stroke="#7f8796" stroke-width="1" />
<path d="M351 101.2 h24 M363 89.2 v24" fill="none" stroke="#7f8796" stroke-width="2.2" />
<path d="M363 88.6 l-4.4 5.8 h8.8 z M363 113.8 l-4.4 -5.8 h8.8 z M350.4 101.2 l5.8 -4.4 v8.8 z M375.6 101.2 l-5.8 -4.4 v8.8 z" fill="#7f8796"/>
<circle cx="356.4" cy="130.4" r="5.2" fill="none" stroke="#7f8796" stroke-width="1.2" /><circle cx="361.3" cy="143.4" r="5.2" fill="none" stroke="#7f8796" stroke-width="1.2" /><circle cx="369.8" cy="143.4" r="5.2" fill="none" stroke="#7f8796" stroke-width="1.2" />
<path d="M363.6 127.6 h6 v4.5" fill="none" stroke="#7f8796" stroke-width="1.2" /><path d="M366.8 131.6 h5.8 l-2.9 4.2 z" fill="#7f8796"/>
<path d="M361.4 184.4 h-10 v-23.2 h10 v23.2 M363.6 161.2 h4.2 l6.6 23.2 h-11" fill="none" stroke="#7f8796" stroke-width="1.2" />
<path d="M357 179.6 h6" fill="none" stroke="#7f8796" stroke-width="1.2" /><path d="M362.6 177.3 l4.4 2.3 l-4.4 2.3 z" fill="#7f8796"/>
<path d="M468.4 92.1 a10.5 10.5 0 1 0 11.5 9.7" fill="none" stroke="#7f8796" stroke-width="1.2" /><path d="M469 88.8 l6.3 3.4 l-6.3 3.6 z" fill="#7f8796"/>
<path d="M467.5 127.6 L457.8 147.5 H467.5 Z M469.6 127.6 V147.5 H479.3 Z" fill="none" stroke="#7f8796" stroke-width="1.2" />
<path d="M457.6 172.6 V161.4 H480.4 V184.4 H471.6" fill="none" stroke="#7f8796" stroke-width="1.2" /><rect x="457.6" y="173" width="11.8" height="11.4" fill="none" stroke="#7f8796" stroke-width="1.2" />
<path d="M561 91.4 h11" fill="none" stroke="#7f8796" stroke-width="1" stroke-dasharray="2 1.3"/><path d="M576 91.4 h9" fill="none" stroke="#7f8796" stroke-width="1.1" />
<path d="M565 95.5 l2 -1 l9.5 12.5 l-2.6 2 z M574.4 89.5 l1.6 0 l0.4 14 l-2.4 3 z" fill="#7f8796"/>
<ellipse cx="572.7" cy="109.7" rx="2.2" ry="3" transform="rotate(25 572.7 109.7)" fill="none" stroke="#7f8796" stroke-width="1.4" /><ellipse cx="578.8" cy="107.3" rx="2.2" ry="3" transform="rotate(-60 578.8 107.3)" fill="none" stroke="#7f8796" stroke-width="1.4" />
<path d="M561.6 138.5 A13 13 0 0 1 574.6 125.5 M576.2 125.5 H585 M561.6 140.3 V148.7" fill="none" stroke="#7f8796" stroke-width="1.2" />
<rect x="563.5" y="163.6" width="7.9" height="7.9" fill="none" stroke="#7f8796" stroke-width="1.2" />
<rect x="563.5" y="174.9" width="7.9" height="7.9" fill="none" stroke="#7f8796" stroke-width="1.2" />
<rect x="575" y="163.6" width="7.9" height="7.9" fill="none" stroke="#7f8796" stroke-width="1.2" />
<rect x="575" y="174.9" width="7.9" height="7.9" fill="none" stroke="#7f8796" stroke-width="1.2" />
<path d="M679 110 l-1 -3.4 l16.8 -16.2 l2.5 -1 v8.6 l-13.8 13.4 z" fill="#6b7383"/><path d="M678.4 107 l4.6 4.3" stroke="#8b93a1" stroke-width="1.6"/>
<path d="M673.2 112.7 h4.6 M684 112.7 h13" fill="none" stroke="#7f8796" stroke-width="1.1" />
<rect x="675" y="133.5" width="13.3" height="13.3" fill="none" stroke="#7f8796" stroke-width="1.2" /><path d="M673 146.8 v-15 l5 -5.6 h17 l-6 6.3 M696 127 v14 l-5.5 6" fill="none" stroke="#7f8796" stroke-width="1.1" /><path d="M673.3 131.7 H690 L695.8 126.4 M690.3 131.8 V147" fill="none" stroke="#7f8796" stroke-width="1.1" />
<path d="M697 165.3 H682 a7.8 7.8 0 0 0 0 15.6 H697 M697 169.2 H683 a3.9 3.9 0 0 0 0 7.8 H697" fill="none" stroke="#7f8796" stroke-width="1.2" />
<text x="748.4" y="132.9" text-anchor="middle" style="font-family:'Liberation Sans',sans-serif;font-size:58.5px" fill="#7f8796" textLength="39.6" lengthAdjust="spacingAndGlyphs">A</text>
<path d="M804.4 88 V136 M851.7 88 V136 M810 97.5 H846" fill="none" stroke="#7f8796" stroke-width="1.2" />
<path d="M805.2 97.5 l6.2 -3.4 v6.8 z M850.9 97.5 l-6.2 -3.4 v6.8 z" fill="#7f8796"/>
<g transform="translate(828,129.3) rotate(-90)"><path d="M9.5 -2 L18.5 -0.6 V0.6 L9.5 2 Z" fill="#6f7786"/></g>
<g transform="translate(828,129.3) rotate(-40)"><path d="M8.5 -2 L17 -0.6 V0.6 L8.5 2 Z" fill="#6f7786"/></g>
<g transform="translate(828,129.3) rotate(-140)"><path d="M8.5 -2 L17 -0.6 V0.6 L8.5 2 Z" fill="#6f7786"/></g>
<g transform="translate(828,129.3) rotate(0)"><path d="M8.5 -2 L18 -0.6 V0.6 L8.5 2 Z" fill="#6f7786"/></g>
<g transform="translate(828,129.3) rotate(180)"><path d="M8.5 -2 L18 -0.6 V0.6 L8.5 2 Z" fill="#6f7786"/></g>
<path d="M881.4 91 V111 M904.7 91 V111 M886 97.5 H900" fill="none" stroke="#7f8796" stroke-width="1.2" />
<path d="M882.6 97.5 l4.4 -2.3 v4.6 z M903.5 97.5 l-4.4 -2.3 v4.6 z" fill="#7f8796"/>
<circle cx="899.5" cy="132.7" r="4.3" fill="none" stroke="#7f8796" stroke-width="1.2" /><path d="M895.2 132.7 H890.3 L884.4 142" fill="none" stroke="#7f8796" stroke-width="1.2" /><path d="M881.9 146.2 l1 -6.6 l4.8 3 z" fill="#7f8796"/>
<rect x="882.2" y="163.5" width="21.6" height="18.2" fill="none" stroke="#7f8796" stroke-width="1.2" /><path d="M882.2 169.2 H903.8 M882.2 173.3 H903.8 M882.2 177.4 H903.8 M889.4 169.2 V181.7 M896.6 169.2 V181.7" fill="none" stroke="#7f8796" stroke-width="1" />
<polygon points="1034.3,106.1 1061.1,106.1 1046.7,124.1 1019.9,124.1" fill="#7d8797" stroke="#455871" stroke-width="0.8"/>
<polygon points="1034.3,97.1 1061.1,97.1 1046.7,115.1 1019.9,115.1" fill="#7d8797" stroke="#455871" stroke-width="0.8"/>
<polygon points="1034.3,88.1 1061.1,88.1 1046.7,106.1 1019.9,106.1" fill="#7d8797" stroke="#455871" stroke-width="0.8"/>
<rect x="1048" y="109" width="20" height="27" fill="#7d8797" stroke="#455871" stroke-width="0.8"/>
<rect x="1050.6" y="111.7" width="13.2" height="9.7" fill="#6b7587" stroke="#455871" stroke-width="0.9"/>
<path d="M1052 127.3 h11 M1052 131.6 h11 M1054.6 125.8 v3 M1060.2 130.1 v3" stroke="#455871" stroke-width="0.9"/>
<circle cx="1106.6" cy="97.5" r="7.5" fill="#a99973"/><path d="M1103 105.6 h7.2 v3.2 l-1.4 2 h-4.4 l-1.4 -2 z" fill="#b3b8c3"/>
<circle cx="1134.5" cy="99.4" r="7.4" fill="#a99973"/>
<path d="M1143.5 99.4 L1146.3 99.4" stroke="#a99973" stroke-width="1.3"/>
<path d="M1140.86 105.764 L1142.84 107.744" stroke="#a99973" stroke-width="1.3"/>
<path d="M1134.5 108.4 L1134.5 111.2" stroke="#a99973" stroke-width="1.3"/>
<path d="M1128.14 105.764 L1126.16 107.744" stroke="#a99973" stroke-width="1.3"/>
<path d="M1125.5 99.4 L1122.7 99.4" stroke="#a99973" stroke-width="1.3"/>
<path d="M1128.14 93.036 L1126.16 91.0561" stroke="#a99973" stroke-width="1.3"/>
<path d="M1134.5 90.4 L1134.5 87.6" stroke="#a99973" stroke-width="1.3"/>
<path d="M1140.86 93.036 L1142.84 91.0561" stroke="#a99973" stroke-width="1.3"/>
<rect x="1152" y="98.6" width="16.8" height="12.4" fill="#a99973"/><rect x="1159.8" y="102.4" width="1.4" height="4.6" fill="#4a5468"/>
<path d="M1163.6 98.6 v-4 a4.6 4.6 0 0 1 9.2 0 v3" fill="none" stroke="#a99973" stroke-width="2.2"/>
<rect x="1182" y="89.2" width="21" height="21" fill="none" stroke="#a3a8b0" stroke-width="1"/>
<polygon points="1101.8,126 1115.3,126 1108.5,135 1095,135" fill="#737b8a"/>
<circle cx="1114.4" cy="141.4" r="4.6" fill="#737b8a"/><path d="M1111.87 145.54 h5.06 l-0.8 3 h-3.46 z" fill="#8a909c"/>
<polygon points="1139.2,135 1152.2,135 1145,143.82 1132,143.82" fill="#737b8a" stroke="#3b4453" stroke-width="0.7"/><polygon points="1139.2,130 1152.2,130 1145,138.82 1132,138.82" fill="#737b8a" stroke="#3b4453" stroke-width="0.7"/><polygon points="1139.2,125 1152.2,125 1145,133.82 1132,133.82" fill="#737b8a" stroke="#3b4453" stroke-width="0.7"/>
<path d="M1155 139 l-7.5 7.5" fill="none" stroke="#7f8796" stroke-width="1.2" /><path d="M1144.8 149.2 l1.6 -6 l4.4 4.4 z" fill="#7f8796"/>
<polygon points="1173.8,126 1187.3,126 1180.5,135 1167,135" fill="#737b8a"/>
<path d="M1178 141.5 h11" transform="rotate(0 1183.5 141.5)" fill="none" stroke="#7f8796" stroke-width="1" />
<path d="M1178 141.5 h11" transform="rotate(45 1183.5 141.5)" fill="none" stroke="#7f8796" stroke-width="1" />
<path d="M1178 141.5 h11" transform="rotate(90 1183.5 141.5)" fill="none" stroke="#7f8796" stroke-width="1" />
<path d="M1178 141.5 h11" transform="rotate(135 1183.5 141.5)" fill="none" stroke="#7f8796" stroke-width="1" />
<circle cx="1183.5" cy="141.5" r="3.4" fill="none" stroke="#7f8796" stroke-width="0.9" />
<polygon points="1209.8,126 1223.3,126 1216.5,135 1203,135" fill="#737b8a"/>
<rect x="1216" y="141.2" width="11" height="7.8" fill="#737b8a"/><rect x="1220.9" y="143.4" width="1.2" height="3.4" fill="#3b4453"/><path d="M1218.1 141.2 v-2.6 a3.4 3.4 0 0 1 6.8 0 v2.6" fill="none" stroke="#737b8a" stroke-width="1.5" />
<polygon points="1246.6,139.4 1263,139.4 1255.4,146.96 1239,146.96" fill="#737b8a" stroke="#3b4453" stroke-width="0.7"/><polygon points="1246.6,134.5 1263,134.5 1255.4,142.06 1239,142.06" fill="#737b8a" stroke="#3b4453" stroke-width="0.7"/><polygon points="1246.6,129.6 1263,129.6 1255.4,137.16 1239,137.16" fill="#737b8a" stroke="#3b4453" stroke-width="0.7"/>
<circle cx="1251.4" cy="129.6" r="4.7" fill="#737b8a" stroke="#3b4453" stroke-width="0.6"/>
<polygon points="1102.2,170.8 1115.2,170.8 1108,179.62 1095,179.62" fill="#737b8a" stroke="#3b4453" stroke-width="0.7"/><polygon points="1102.2,165.8 1115.2,165.8 1108,174.62 1095,174.62" fill="#737b8a" stroke="#3b4453" stroke-width="0.7"/><polygon points="1102.2,160.8 1115.2,160.8 1108,169.62 1095,169.62" fill="#737b8a" stroke="#3b4453" stroke-width="0.7"/>
<circle cx="1114.4" cy="177.2" r="4.6" fill="#737b8a"/><path d="M1111.87 181.34 h5.06 l-0.8 3 h-3.46 z" fill="#8a909c"/>
<polygon points="1139.2,170.8 1152.2,170.8 1145,179.62 1132,179.62" fill="#737b8a" stroke="#3b4453" stroke-width="0.7"/><polygon points="1139.2,165.8 1152.2,165.8 1145,174.62 1132,174.62" fill="#737b8a" stroke="#3b4453" stroke-width="0.7"/><polygon points="1139.2,160.8 1152.2,160.8 1145,169.62 1132,169.62" fill="#737b8a" stroke="#3b4453" stroke-width="0.7"/>
<path d="M1145.2 185 l7.5 -7.5" fill="none" stroke="#7f8796" stroke-width="1.2" /><path d="M1155.4 174.8 l-1.6 6 l-4.4 -4.4 z" fill="#7f8796"/>
<polygon points="1174.2,170.8 1187.2,170.8 1180,179.62 1167,179.62" fill="#737b8a" stroke="#3b4453" stroke-width="0.7"/><polygon points="1174.2,165.8 1187.2,165.8 1180,174.62 1167,174.62" fill="#737b8a" stroke="#3b4453" stroke-width="0.7"/><polygon points="1174.2,160.8 1187.2,160.8 1180,169.62 1167,169.62" fill="#737b8a" stroke="#3b4453" stroke-width="0.7"/>
<circle cx="1184" cy="178" r="4.2" fill="#737b8a"/>
<rect x="1190.1" y="177.2" width="1.6" height="1.6" fill="#737b8a"/>
<rect x="1188.08" y="182.079" width="1.6" height="1.6" fill="#737b8a"/>
<rect x="1183.2" y="184.1" width="1.6" height="1.6" fill="#737b8a"/>
<rect x="1178.32" y="182.079" width="1.6" height="1.6" fill="#737b8a"/>
<rect x="1176.3" y="177.2" width="1.6" height="1.6" fill="#737b8a"/>
<rect x="1178.32" y="172.321" width="1.6" height="1.6" fill="#737b8a"/>
<rect x="1183.2" y="170.3" width="1.6" height="1.6" fill="#737b8a"/>
<rect x="1188.08" y="172.321" width="1.6" height="1.6" fill="#737b8a"/>
<polygon points="1209.8,161.8 1223.3,161.8 1216.5,170.8 1203,170.8" fill="#737b8a"/>
<rect x="1213" y="178" width="11" height="7.4" fill="#737b8a"/><rect x="1217.9" y="180" width="1.2" height="3.4" fill="#3b4453"/><path d="M1219.05 178 v-3 a3.4 3.4 0 0 1 6.8 0 v2" fill="none" stroke="#737b8a" stroke-width="1.5" />
<polygon points="1246.2,170.8 1259.2,170.8 1252,179.62 1239,179.62" fill="#737b8a" stroke="#3b4453" stroke-width="0.7"/><polygon points="1246.2,165.8 1259.2,165.8 1252,174.62 1239,174.62" fill="#737b8a" stroke="#3b4453" stroke-width="0.7"/><polygon points="1246.2,160.8 1259.2,160.8 1252,169.62 1239,169.62" fill="#737b8a" stroke="#3b4453" stroke-width="0.7"/>
<g transform="translate(1257.5,180) rotate(45)"><rect x="-5.4" y="-3" width="10.8" height="6.6" fill="#737b8a" stroke="#3b4453" stroke-width="0.7"/><rect x="-1.6" y="-7" width="3.2" height="4.4" fill="#737b8a"/></g>
<path d="M1435.8 85 h19 l7 7 v29.6 h-26 z" fill="#6c7484"/><path d="M1454.8 85 v7 h7" fill="#8e96a4"/>
<rect x="1416" y="101.4" width="30" height="21.4" fill="#4f5868" stroke="#7f8796" stroke-width="1.1"/>
<circle cx="1445.4" cy="122.8" r="10.4" fill="none" stroke="#7f8796" stroke-width="1.1" />
<rect x="1414" y="121" width="4" height="4" fill="#7f8796"/>
<rect x="1474.4" y="98.3" width="15" height="10.4" fill="#4f5868" stroke="#7f8796" stroke-width="1.1"/>
<circle cx="1488.6" cy="108.2" r="4.2" fill="none" stroke="#7f8796" stroke-width="1.1" />
<rect x="1472.9" y="107.2" width="3" height="3" fill="#7f8796"/>
<polygon points="1496.8,95.4 1493.2,96.395 1495.04,99.6426 1491.79,97.8021 1490.8,101.4 1489.81,97.8021 1486.56,99.6426 1488.4,96.395 1484.8,95.4 1488.4,94.405 1486.56,91.1574 1489.81,92.9979 1490.8,89.4 1491.79,92.9979 1495.04,91.1574 1493.2,94.405" fill="#7f8796"/>
<rect x="1474.4" y="134.1" width="15" height="10.4" fill="#4f5868" stroke="#7f8796" stroke-width="1.1"/>
<circle cx="1488.6" cy="144" r="4.2" fill="none" stroke="#7f8796" stroke-width="1.1" />
<rect x="1472.9" y="143" width="3" height="3" fill="#7f8796"/>
<g transform="translate(1484.6,137) rotate(-38)"><path d="M0 0 l3.6 -2.3 h9 a2 2.3 0 0 1 0 4.6 h-9 z" fill="#737b8a" stroke="#3b4453" stroke-width="0.6"/></g>
<path d="M1473.4 163.6 h9.4 l13.2 12.4 l-10.6 9.4 l-12 -11.6 z" fill="#737b8a"/><circle cx="1477.3" cy="167.6" r="1.3" fill="#3b4453"/>
<path d="M1481 171.5 l8 7.4 M1478.6 175 l5 4.6" stroke="#3b4453" stroke-width="0.9"/>
<g transform="translate(1484.6,172.6) rotate(-38)"><path d="M0 0 l3.6 -2.3 h9 a2 2.3 0 0 1 0 4.6 h-9 z" fill="#737b8a" stroke="#3b4453" stroke-width="0.8"/></g>
<rect x="1674.1" y="88.9" width="29.8" height="42" fill="#6c7484"/>
<rect x="1677.7" y="92.5" width="20.2" height="14.7" fill="#6c7484" stroke="#3b4453" stroke-width="1"/>
<path d="M1679 115.4 h18 M1679 123.6 h14 M1682.6 113.4 v4 M1693.2 121.4 v4.4" stroke="#3b4453" stroke-width="1"/>
<g transform="translate(1708,126.5) rotate(40)"><rect x="-9.5" y="-4" width="19" height="10.5" rx="1.5" fill="#6c7484" stroke="#3b4453" stroke-width="0.8"/><rect x="-2.8" y="-11" width="5.6" height="7.5" rx="1.2" fill="#6c7484"/></g>
<path d="M1755.9 100.9 L1749.95 90.5943 A11.9 11.9 0 0 1 1761.85 90.5943 Z" fill="#fbc02d"/>
<path d="M1755.9 100.9 L1761.85 90.5943 A11.9 11.9 0 0 1 1767.8 100.9 Z" fill="#fb8c32"/>
<path d="M1755.9 100.9 L1767.8 100.9 A11.9 11.9 0 0 1 1761.85 111.206 Z" fill="#e8504c"/>
<path d="M1755.9 100.9 L1761.85 111.206 A11.9 11.9 0 0 1 1749.95 111.206 Z" fill="#8b55f0"/>
<path d="M1755.9 100.9 L1749.95 111.206 A11.9 11.9 0 0 1 1744 100.9 Z" fill="#19b6d8"/>
<path d="M1755.9 100.9 L1744 100.9 A11.9 11.9 0 0 1 1749.95 90.5943 Z" fill="#4fcf85"/>
<rect x="1744.1" y="124.8" width="23.7" height="1" fill="#9aa0ab"/><rect x="1744.1" y="128.9" width="23.7" height="3" fill="#9aa0ab"/><rect x="1744.1" y="135" width="23.7" height="4.9" fill="#9aa0ab"/><rect x="1744.1" y="142.9" width="23.7" height="5.9" fill="#9aa0ab"/>
<path d="M1744.1 164 h23.7" stroke="#9aa0ab" stroke-width="1" stroke-dasharray="2 1.5"/>
<path d="M1744.1 168.3 h23.7" stroke="#9aa0ab" stroke-width="1" stroke-dasharray="5 2"/>
<path d="M1744.1 172.4 h23.7" stroke="#9aa0ab" stroke-width="1" stroke-dasharray="7 2 2 2"/>
<path d="M1744.1 176.6 h23.7" stroke="#9aa0ab" stroke-width="1" stroke-dasharray="4 2"/>
<path d="M1744.1 180.5 h23.7" stroke="#9aa0ab" stroke-width="1" stroke-dasharray="8 2"/>
<path d="M2061 96.3 h-4.7 v39 h4.7 M2084.3 135.3 h4.7 v-20.8" fill="none" stroke="#7f8796" stroke-width="1.2" />
<rect x="2065.5" y="102" width="14.2" height="10" fill="#4f5868" stroke="#7f8796" stroke-width="1.1"/><circle cx="2072.4" cy="124.5" r="7.3" fill="#4f5868" stroke="#7f8796" stroke-width="1.1"/>
<polygon points="2090.2,88.7 2092.27,95.9111 2098.83,92.2733 2095.19,98.8335 2102.4,100.9 2095.19,102.966 2098.83,109.527 2092.27,105.889 2090.2,113.1 2088.13,105.889 2081.57,109.527 2085.21,102.966 2078,100.9 2085.21,98.8335 2081.57,92.2733 2088.13,95.9111" fill="#7f8796"/>
<rect x="2119" y="92.9" width="8" height="7" fill="#4f5868" stroke="#7f8796" stroke-width="1"/><circle cx="2123" cy="106.4" r="4" fill="#4f5868" stroke="#7f8796" stroke-width="1"/>
<path d="M2129.5 89.4 h3.5 v7 M2133 108.4 v4 h-3.5" fill="none" stroke="#7f8796" stroke-width="1.1"  stroke-dasharray="3 1.6"/>
<path d="M2131.5 99.4 l5 5 M2136.5 99.4 l-5 5" fill="none" stroke="#7f8796" stroke-width="1.6" />
<rect x="2119" y="128.5" width="8" height="7" fill="#4f5868" stroke="#7f8796" stroke-width="1"/><circle cx="2123" cy="142" r="4" fill="#4f5868" stroke="#7f8796" stroke-width="1"/>
<path d="M2119 125 h-3.5 v20 h3.5 M2127.5 125 h3.5 v11" fill="none" stroke="#7f8796" stroke-width="1.1" />
<g transform="translate(2128.5,148) rotate(-38)"><path d="M0 0 l3.6 -2.3 h8 a2 2.3 0 0 1 0 4.6 h-8 z" fill="#7f8796"/></g>
<rect x="2119" y="164.7" width="8" height="7" fill="#4f5868" stroke="#7f8796" stroke-width="1"/><circle cx="2123" cy="178.2" r="4" fill="#4f5868" stroke="#7f8796" stroke-width="1"/>
<path d="M2119 161.2 h-3.5 v20 h3.5 M2127.5 161.2 h3.5 v11" fill="none" stroke="#7f8796" stroke-width="1.1" />
<path d="M2130.1 172.2 v12 l3 -2.8 l2 4.4 l2 -1 l-2 -4.2 h4 z" fill="#9aa1ae"/>
<rect x="2182.2" y="107.2" width="41.8" height="9.4" fill="#737b8a"/>
<rect x="2185.98" y="107.2" width="0.9" height="4" fill="#3b4453"/>
<rect x="2190.16" y="107.2" width="0.9" height="4" fill="#3b4453"/>
<rect x="2194.34" y="107.2" width="0.9" height="4" fill="#3b4453"/>
<rect x="2198.52" y="107.2" width="0.9" height="4" fill="#3b4453"/>
<rect x="2202.7" y="107.2" width="0.9" height="5.4" fill="#3b4453"/>
<rect x="2206.88" y="107.2" width="0.9" height="4" fill="#3b4453"/>
<rect x="2211.06" y="107.2" width="0.9" height="4" fill="#3b4453"/>
<rect x="2215.24" y="107.2" width="0.9" height="4" fill="#3b4453"/>
<rect x="2219.42" y="107.2" width="0.9" height="4" fill="#3b4453"/>
<path d="M2261.4 96 v13.5 l3.4 -3 l2.2 4.8 l2.2 -1 l-2.2 -4.6 h4.6 z" fill="#7f8796"/><rect x="2271.5" y="98.5" width="13.5" height="14" fill="#737b8a"/><path d="M2274 102.5 h1.6 M2277 102.5 h6 M2274 105.8 h1.6 M2277 105.8 h6 M2274 109 h1.6 M2277 109 h6" stroke="#3b4453" stroke-width="1.1"/><path d="M2272 89.6 l-4.6 5.4 h3.6 l-2 4.2 l6.4 -6 h-3.6 l3 -3.6 z" fill="#737b8a"/>
<rect x="2261.6" y="125.4" width="21.2" height="21.2" fill="none" stroke="#7f8796" stroke-width="1"  stroke-dasharray="2.4 1.6"/><rect x="2264.5" y="131.5" width="11.5" height="11.5" fill="#5e6777"/><rect x="2268" y="128" width="11.5" height="11.5" fill="#737b8a"/><path d="M2275.6 136 v12.5 l3.2 -2.8 l2.1 4.4 l2.1 -1 l-2.1 -4.2 h4.3 z" fill="#9aa1ae"/>
<rect x="2264" y="161.2" width="17" height="23.4" fill="#737b8a"/><rect x="2266.4" y="163.8" width="12.2" height="4.6" fill="#3b4453"/>
<rect x="2266.4" y="171" width="2.8" height="2.8" fill="#3b4453"/>
<rect x="2266.4" y="175.4" width="2.8" height="2.8" fill="#3b4453"/>
<rect x="2266.4" y="179.8" width="2.8" height="2.8" fill="#3b4453"/>
<rect x="2271.1" y="171" width="2.8" height="2.8" fill="#3b4453"/>
<rect x="2271.1" y="175.4" width="2.8" height="2.8" fill="#3b4453"/>
<rect x="2271.1" y="179.8" width="2.8" height="2.8" fill="#3b4453"/>
<rect x="2275.8" y="171" width="2.8" height="2.8" fill="#3b4453"/>
<rect x="2275.8" y="175.4" width="2.8" height="2.8" fill="#3b4453"/>
<rect x="2275.8" y="179.8" width="2.8" height="2.8" fill="#3b4453"/>
<rect x="2317" y="92.5" width="32.4" height="37.7" fill="#677080"/><rect x="2325" y="88.2" width="16" height="6.4" rx="1" fill="#677080"/><rect x="2330" y="86.6" width="6" height="3" fill="#677080"/>
<path d="M2328 103 h18.7 l8 8 v25 h-26.7 z" fill="#78808f" stroke="#3b4453" stroke-width="0.9"/><path d="M2346.7 103 v8 h8" fill="#8d95a3" stroke="#3b4453" stroke-width="0.6"/>
<rect x="2381.2" y="88.8" width="18" height="21" fill="#737b8a"/><path d="M2384 94 h12 M2384 98 h12 M2384 102 h9 M2384 106 h8" stroke="#3b4453" stroke-width="0.9"/>
<path d="M2392 97.5 l8.5 10.5 M2404 99 l-8.5 9" stroke="#9aa1ae" stroke-width="1.5"/><circle cx="2395" cy="110.5" r="2.4" fill="none" stroke="#9aa1ae" stroke-width="1.3" /><circle cx="2402.2" cy="110.5" r="2.4" fill="none" stroke="#9aa1ae" stroke-width="1.3" />
<path d="M2384 125 h9 l4 4 v14 h-13 z" fill="#677080"/><path d="M2388.6 130 h9.4 l4.6 4.6 v14 h-14 z" fill="#78808f" stroke="#3b4453" stroke-width="0.8"/>
<path d="M2455 93 h21 v14.6 h26.7 v21.1 h-47.7 z" fill="#737b8a"/>
</svg>
</div>
<div class="layer" id="bot">
<div class="r" style="left:563.2px;top:1272.4px;width:37.4px;height:201.6px;background:#29303d;border-radius:5px 0 0 3px;"></div>
<div class="r" style="left:600.2px;top:1273.1px;width:1432.8px;height:169.3px;background:rgba(161,162,163,.93);border-radius:0 3px 0 0;"></div>
<div class="r" style="left:600.2px;top:1442.3px;width:1432.8px;height:1.9px;background:#212c3c;"></div>
<div class="r" style="left:600.2px;top:1444.2px;width:1432.8px;height:29.2px;background:rgba(199,200,202,.95);border-radius:0 0 3px 0;"></div>
<span class="t" id="t72" style="left:603.76px;top:1282.12px;font-size:18.33px;line-height:18.33px;color:#141414;font-family:'Liberation Mono',monospace;white-space:pre;">OSNAP</span>
<span class="t" id="t73" style="left:603.65px;top:1305.13px;font-size:18.33px;line-height:18.33px;color:#141414;font-family:'Liberation Mono',monospace;white-space:pre;">Command:  &lt;Osnap off&gt;</span>
<span class="t" id="t74" style="left:603.65px;top:1328.13px;font-size:18.33px;line-height:18.33px;color:#141414;font-family:'Liberation Mono',monospace;white-space:pre;">Command: PO</span>
<span class="t" id="t75" style="left:603.00px;top:1351.13px;font-size:18.33px;line-height:18.33px;color:#141414;font-family:'Liberation Mono',monospace;white-space:pre;">POINT</span>
<span class="t" id="t76" style="left:603.65px;top:1374.12px;font-size:18.33px;line-height:18.33px;color:#141414;font-family:'Liberation Mono',monospace;white-space:pre;">Current point modes:  PDMODE=0  PDSIZE=0.000</span>
<span class="t" id="t77" style="left:603.65px;top:1397.13px;font-size:18.33px;line-height:18.33px;color:#141414;font-family:'Liberation Mono',monospace;white-space:pre;">Specify a point: 1.5,0</span>
<span class="t" id="t78" style="left:603.65px;top:1420.13px;font-size:18.33px;line-height:18.33px;color:#141414;font-family:'Liberation Mono',monospace;white-space:pre;">Command: DDPTYPE</span>
<span class="t" id="t79" style="left:654.36px;top:1450.12px;font-size:18.30px;line-height:18.30px;color:#606267;font-style:italic;font-family:'Liberation Mono',monospace;white-space:pre;letter-spacing:0.084px;">Type a command</span>
<div class="r" style="left:3.3px;top:1479.9px;width:2553.4px;height:46.8px;background:#222933;"></div>
<span class="t" id="t80" style="left:44.21px;top:1491.13px;font-size:18.50px;line-height:18.50px;color:#fff;font-weight:bold;letter-spacing:0.141px;">Model</span>
<span class="t" id="t81" style="left:135.69px;top:1491.13px;font-size:18.00px;line-height:18.00px;color:#f0f0f0;letter-spacing:-1.049px;">a3</span>
<div class="r" style="left:1686.2px;top:1483.8px;width:71.6px;height:36.1px;background:#3b4453;"></div>
<div class="r" style="left:1764px;top:1483.8px;width:96px;height:36.1px;background:#3b4453;"></div>
<div class="r" style="left:1866.1px;top:1483.8px;width:35.9px;height:36.1px;background:#3b4453;"></div>
<div class="r" style="left:1904.2px;top:1483.8px;width:155.7px;height:36.1px;background:#3b4453;"></div>
<div class="r" style="left:2097px;top:1483.8px;width:60.7px;height:36.1px;background:#3b4453;"></div>
<div class="r" style="left:2199px;top:1483.8px;width:123px;height:36.1px;background:#3b4453;"></div>
<div class="r" style="left:2327.8px;top:1483.8px;width:60.2px;height:36.1px;background:#3b4453;"></div>
<div class="r" style="left:2390.1px;top:1483.8px;width:35.9px;height:36.1px;background:#3b4453;"></div>
<div class="r" style="left:2432.1px;top:1483.8px;width:35.9px;height:36.1px;background:#3b4453;"></div>
<div class="r" style="left:2471.8px;top:1483.8px;width:4px;height:36.1px;background:#3b4453;"></div>
<div class="r" style="left:2479.9px;top:1483.8px;width:72.2px;height:36.1px;background:#3b4453;"></div>
<div class="r" style="left:2062.7px;top:1485px;width:34.3px;height:34px;background:#6092c5;"></div>
<div class="r" style="left:2164.9px;top:1485.1px;width:34.2px;height:33.8px;background:#6092c5;"></div>
<span class="t" id="t82" style="left:1690.89px;top:1494.12px;font-size:19.00px;line-height:19.00px;color:#f4f4f4;-webkit-text-stroke:0.35px #f4f4f4;letter-spacing:-1.491px;">MODEL</span>
<span class="t" id="t83" style="left:2279.60px;top:1494.14px;font-size:18.20px;line-height:18.20px;color:#ffffff;font-weight:bold;transform-origin:0 50%;transform:scaleX(0.66);">1:1</span>
<svg class="full" width="2560" height="1528" viewBox="0 0 2560 1528">
<polygon points="34.3,1479.9 124,1479.9 109,1515.8 19.1,1515.8" fill="#3b4453"/>
<path d="M167.5 1509.5 l10.3 -23.5" stroke="#4d5869" stroke-width="1.3"/>
<path d="M227.4 1509.5 l10.3 -23.5" stroke="#4d5869" stroke-width="1.3"/>
<path d="M192.8 1498.5 h18.4 M202 1489.5 v18" stroke="#f0f0f0" stroke-width="3"/>
<path d="M1842 1498.9 h12.2 l-6.1 6.4 z" fill="#dcdcdc"/>
<path d="M1981.8 1498.9 h12.2 l-6.1 6.4 z" fill="#dcdcdc"/>
<path d="M2041.9 1498.9 h12.2 l-6.1 6.4 z" fill="#dcdcdc"/>
<path d="M2139.9 1498.9 h12.2 l-6.1 6.4 z" fill="#dcdcdc"/>
<path d="M2304 1498.9 h12.2 l-6.1 6.4 z" fill="#dcdcdc"/>
<path d="M2369.9 1498.9 h12.2 l-6.1 6.4 z" fill="#dcdcdc"/>
<rect x="569.2" y="1280" width="1.8" height="1.6" fill="#d0d3d8"/>
<rect x="573.9" y="1280" width="1.8" height="1.6" fill="#d0d3d8"/>
<rect x="578.6" y="1280" width="1.8" height="1.6" fill="#d0d3d8"/>
<rect x="583.3" y="1280" width="1.8" height="1.6" fill="#d0d3d8"/>
<rect x="588" y="1280" width="1.8" height="1.6" fill="#d0d3d8"/>
<rect x="592.7" y="1280" width="1.8" height="1.6" fill="#d0d3d8"/>
<path d="M575 1301.5 l12 12 M587 1301.5 l-12 12" stroke="#c9ccd2" stroke-width="2.6"/>
<path d="M571.5 1352 L584 1340.5" stroke="#b3b7bd" stroke-width="3.4" stroke-linecap="round"/>
<path d="M590.6 1332.6 a6.2 6.2 0 1 0 1.8 6.4 l-4.2 1.2 l-2.6 -2.6 l1 -4 z" fill="#b3b7bd"/>
<rect x="607.7" y="1451.6" width="22.6" height="16.6" fill="#b3b4b7" stroke="#54575d" stroke-width="1.1"/><rect x="607.7" y="1451.6" width="22.6" height="4.4" fill="#54575d"/><rect x="609.2" y="1452.6" width="1.6" height="1.4" fill="#ddd"/>
<path d="M610.5 1459.3 l3 2.2 l-3 2.2 M614.8 1464.6 h4.2" fill="none" stroke="#54575d" stroke-width="1" />
<path d="M634.3 1457.4 h11 l-5.5 5.6 z" fill="#595c62"/>
<path d="M2016.5 1462 l5.4 -5.6 l5.4 5.6 z" fill="#5c5f65"/>
<path d="M1775.5 1490 V1513 M1781.7 1490 V1513 M1787.9 1490 V1513 M1770.2 1495.7 H1793.2 M1770.2 1501.5 H1793.2 M1770.2 1507.3 H1793.2" fill="none" stroke="#e6e6e6" stroke-width="1.1" />
<rect x="1809.1" y="1493" width="3" height="3" fill="#e6e6e6"/>
<rect x="1809.1" y="1500" width="3" height="3" fill="#e6e6e6"/>
<rect x="1809.1" y="1507.1" width="3" height="3" fill="#e6e6e6"/>
<rect x="1816.2" y="1493" width="3" height="3" fill="#e6e6e6"/>
<rect x="1816.2" y="1500" width="3" height="3" fill="#e6e6e6"/>
<rect x="1816.2" y="1507.1" width="3" height="3" fill="#e6e6e6"/>
<rect x="1823.2" y="1493" width="3" height="3" fill="#e6e6e6"/>
<rect x="1823.2" y="1500" width="3" height="3" fill="#e6e6e6"/>
<rect x="1823.2" y="1507.1" width="3" height="3" fill="#e6e6e6"/>
<path d="M1872 1498.9 h10.6 M1877.3 1493.6 v10.6" fill="none" stroke="#e6e6e6" stroke-width="1.2" />
<rect x="1880.8" y="1505" width="15.4" height="6" fill="#dcdcdc"/><rect x="1882" y="1506.2" width="1.5" height="3.6" fill="#3b4453"/>
<path d="M1910.4 1490 V1513.4 H1934.2 M1910.4 1506.4 h7 v7" fill="none" stroke="#e6e6e6" stroke-width="1.2" />
<circle cx="1955.7" cy="1502.4" r="9.5" fill="none" stroke="#e6e6e6" stroke-width="1.2" /><path d="M1955.7 1502.4 H1970.2 M1955.7 1502.4 L1966.3 1492.2" fill="none" stroke="#e6e6e6" stroke-width="1.2" />
<path d="M2018.3 1490 V1511.8" stroke="#3fd06a" stroke-width="1.2"/><path d="M2009.1 1492.2 L2026.8 1509.8" stroke="#e0505a" stroke-width="1.2"/><rect x="2016.2" y="1499.3" width="3.6" height="3.6" fill="#3b4453" stroke="#e6e6e6" stroke-width="0.9"/>
<path d="M2068.4 1510.4 L2086 1493.6 M2068.4 1510.4 H2092.2" fill="none" stroke="#fff" stroke-width="1.3" /><rect x="2075" y="1500" width="3.8" height="3.8" fill="#fff"/>
<rect x="2107.4" y="1494" width="20.4" height="19.5" fill="none" stroke="#e6e6e6" stroke-width="1.2" /><rect x="2103.8" y="1490.9" width="6.4" height="6" fill="#3b4453" stroke="#f0a264" stroke-width="1.2"/>
<path d="M2180.5 1489.9 L2184.5 1500.3 L2183.1 1502.3 L2191.1 1514 L2182.3 1509.1 Q2180.5 1507.3 2178.7 1509.1 L2169.9 1514 L2177.9 1502.3 L2176.5 1500.3 Z" fill="#fff"/>
<circle cx="2189.4" cy="1495.5" r="4" fill="none" stroke="#fff" stroke-width="1.3" />
<path d="M2216.4 1489.9 L2220.4 1500.3 L2219 1502.3 L2227 1514 L2218.2 1509.1 Q2216.4 1507.3 2214.6 1509.1 L2205.8 1514 L2213.8 1502.3 L2212.4 1500.3 Z" fill="#dcdcdc"/>
<path d="M2228 1489.8 L2221.2 1496.2 L2224.4 1496.9 L2221.8 1502.2 L2229.4 1495.8 L2226.2 1495.1 Z" fill="#dcdcdc"/>
<path d="M2253.5 1489.9 L2257.5 1500.3 L2256.1 1502.3 L2264.1 1514 L2255.3 1509.1 Q2253.5 1507.3 2251.7 1509.1 L2242.9 1514 L2250.9 1502.3 L2249.5 1500.3 Z" fill="#dcdcdc"/>
<polygon points="2357.76,1499.64 2357.76,1504.36 2354.26,1504.71 2353.79,1505.86 2356.02,1508.58 2352.68,1511.92 2349.96,1509.69 2348.81,1510.16 2348.46,1513.66 2343.74,1513.66 2343.39,1510.16 2342.24,1509.69 2339.52,1511.92 2336.18,1508.58 2338.41,1505.86 2337.94,1504.71 2334.44,1504.36 2334.44,1499.64 2337.94,1499.29 2338.41,1498.14 2336.18,1495.42 2339.52,1492.08 2342.24,1494.31 2343.39,1493.84 2343.74,1490.34 2348.46,1490.34 2348.81,1493.84 2349.96,1494.31 2352.68,1492.08 2356.02,1495.42 2353.79,1498.14 2354.26,1499.29" fill="#e0e0e0"/><circle cx="2346.1" cy="1502" r="4.1" fill="#3b4453"/>
<path d="M2396 1501.6 h23 M2407.5 1490 v23" fill="none" stroke="#e6e6e6" stroke-width="3" />
<rect x="2438.7" y="1490.9" width="8.6" height="8.6" fill="none" stroke="#e6e6e6" stroke-width="1.1" /><circle cx="2456.7" cy="1500.7" r="4.9" fill="none" stroke="#e6e6e6" stroke-width="1.1" /><path d="M2442.3 1513.5 l5.4 -8.4 l5.4 8.4 z" fill="none" stroke="#e6e6e6" stroke-width="1.1" />
<rect x="2486.5" y="1493.6" width="23.4" height="16" fill="none" stroke="#e6e6e6" stroke-width="1.2" />
<path d="M2500.6 1499.8 l5 -3.8 M2497 1503.2 l-5 3.8" fill="none" stroke="#e6e6e6" stroke-width="1.2" /><path d="M2506.4 1495.2 h-4.6 l4.6 4.2 z M2491.2 1507.8 h4.6 l-4.6 -4.2 z" fill="#e6e6e6"/>
<rect x="2522.2" y="1490.9" width="23.8" height="2.9" fill="#e6e6e6"/>
<rect x="2522.2" y="1500.7" width="23.8" height="2.9" fill="#e6e6e6"/>
<rect x="2522.2" y="1509.3" width="23.8" height="2.9" fill="#e6e6e6"/>
</svg>
</div>
<div class="layer" id="dialog">
<div class="r" style="left:1091px;top:500px;width:378px;height:519px;border-radius:12px;background:#f0f0f0;box-shadow:0 0 0 1px #4a4d53, 0 10px 36px 6px rgba(0,0,0,.38);"></div>
<div class="r" style="left:1091px;top:500px;width:378px;height:44px;border-radius:12px 12px 0 0;background:#eff2f9;"></div>
<span class="t" id="t84" style="left:1133.70px;top:513.13px;font-size:18.00px;line-height:18.00px;color:#111;letter-spacing:-0.310px;">Point Style</span>
<span class="t" id="t85" style="left:1105.89px;top:839.13px;font-size:17.10px;line-height:17.10px;color:#000;letter-spacing:-0.530px;">Point Size:</span>
<div class="r" style="left:1207px;top:830px;width:167px;height:28.5px;background:#fff;border-bottom:1px solid #858585;border-radius:3px;box-sizing:border-box;"></div>
<span class="t" id="t86" style="left:1208.89px;top:834.13px;font-size:17.10px;line-height:17.10px;color:#000;letter-spacing:-0.760px;">5.0000</span>
<span class="t" id="t87" style="left:1388.40px;top:839.13px;font-size:17.10px;line-height:17.10px;color:#000;">%</span>
<span class="t" id="t88" style="left:1130.97px;top:905.13px;font-size:17.10px;line-height:17.10px;color:#000;letter-spacing:-0.552px;">Set Size Relative to Screen</span>
<span class="t" id="t89" style="left:1130.97px;top:935.13px;font-size:17.10px;line-height:17.10px;color:#000;letter-spacing:-0.495px;">Set Size in Absolute Units</span>
<div class="r" style="left:1106.3px;top:968.4px;width:110.5px;height:32.4px;background:#fdfdfd;border:1.6px solid #0a66c4;border-radius:6px;box-sizing:border-box;"></div>
<div class="r" style="left:1225.2px;top:968.4px;width:110.5px;height:32.4px;background:#fdfdfd;border:1px solid #d0d0d0;border-bottom-color:#bdbdbd;border-radius:6px;box-sizing:border-box;"></div>
<div class="r" style="left:1344.2px;top:968.4px;width:110.5px;height:32.4px;background:#fdfdfd;border:1px solid #d0d0d0;border-bottom-color:#bdbdbd;border-radius:6px;box-sizing:border-box;"></div>
<span class="t" id="t90" style="left:1150.10px;top:976.13px;font-size:17.10px;line-height:17.10px;color:#000;letter-spacing:-1.900px;">OK</span>
<span class="t" id="t91" style="left:1255.81px;top:976.13px;font-size:17.10px;line-height:17.10px;color:#000;letter-spacing:-0.722px;">Cancel</span>
<span class="t" id="t92" style="left:1383.21px;top:976.13px;font-size:17.10px;line-height:17.10px;color:#000;letter-spacing:-0.805px;">Help</span>
<svg class="full" width="2560" height="1528" viewBox="0 0 2560 1528">
<path d="M1103.5 514.5 l5 -4.5 v22.5 l-5 -1 z" fill="#e9527e"/>
<rect x="1107.5" y="509.5" width="17.5" height="23.3" rx="2.5" fill="#e51050"/>
<rect x="1107.5" y="525.3" width="17.5" height="7.5" fill="#8c0f36"/>
<text x="1116.2" y="524" text-anchor="middle" style="font-family:'Liberation Sans',sans-serif;font-weight:bold;font-size:13px" fill="#fff">A</text>
<text x="1116.2" y="531.3" text-anchor="middle" style="font-family:'Liberation Sans',sans-serif;font-weight:bold;font-size:5.4px" fill="#f6c7d5">CAD</text>
<path d="M1437.3 514.6 l14.6 14.4 M1451.9 514.6 l-14.6 14.4" stroke="#111" stroke-width="1.6"/>
<rect x="1098.5" y="549.5" width="60" height="48" fill="#fff" stroke="#000" stroke-width="1" shape-rendering="crispEdges"/>
<rect x="1128" y="573" width="1" height="1" fill="#000"/>
<rect x="1173.5" y="549.5" width="60" height="48" fill="#fff" stroke="#000" stroke-width="1" shape-rendering="crispEdges"/>

<rect x="1248.5" y="549.5" width="60" height="48" fill="#fff" stroke="#000" stroke-width="1" shape-rendering="crispEdges"/>
<path d="M1262.5 573.5 h32 M1278.5 557.5 v32" stroke="#000" stroke-width="1" fill="none" shape-rendering="crispEdges"/>
<rect x="1323.5" y="549.5" width="60" height="48" fill="#fff" stroke="#000" stroke-width="1" shape-rendering="crispEdges"/>
<path d="M1337.5 557.5 l32 32 M1369.5 557.5 l-32 32" stroke="#000" stroke-width="1" fill="none"/>
<rect x="1398.5" y="549.5" width="60" height="48" fill="#fff" stroke="#000" stroke-width="1" shape-rendering="crispEdges"/>
<path d="M1428.5 560.5 v13" stroke="#000" stroke-width="1" fill="none" shape-rendering="crispEdges"/>
<rect x="1098.5" y="608.5" width="60" height="48" fill="#fff" stroke="#000" stroke-width="1" shape-rendering="crispEdges"/>
<rect x="1128" y="632" width="1" height="1" fill="#000"/><circle cx="1128.5" cy="632.5" r="16" stroke="#000" stroke-width="1" fill="none"/>
<rect x="1173.5" y="608.5" width="60" height="48" fill="#fff" stroke="#000" stroke-width="1" shape-rendering="crispEdges"/>
<circle cx="1203.5" cy="632.5" r="16" stroke="#000" stroke-width="1" fill="none"/>
<rect x="1248.5" y="608.5" width="60" height="48" fill="#fff" stroke="#000" stroke-width="1" shape-rendering="crispEdges"/>
<path d="M1262.5 632.5 h32 M1278.5 616.5 v32" stroke="#000" stroke-width="1" fill="none" shape-rendering="crispEdges"/><circle cx="1278.5" cy="632.5" r="16" stroke="#000" stroke-width="1" fill="none"/>
<rect x="1324" y="608.7" width="59" height="46.5" fill="#000"/>
<rect x="1328.5" y="612.5" width="50" height="39" fill="none" stroke="#c8c8c8" stroke-width="1" stroke-dasharray="3 2" shape-rendering="crispEdges"/>
<path d="M1337.5 616.5 l32 32 M1369.5 616.5 l-32 32" stroke="#fff" stroke-width="1" fill="none"/><circle cx="1353.5" cy="632.5" r="16" stroke="#fff" stroke-width="1" fill="none"/>
<rect x="1398.5" y="608.5" width="60" height="48" fill="#fff" stroke="#000" stroke-width="1" shape-rendering="crispEdges"/>
<path d="M1428.5 619.5 v13" stroke="#000" stroke-width="1" fill="none" shape-rendering="crispEdges"/><circle cx="1428.5" cy="632.5" r="16" stroke="#000" stroke-width="1" fill="none"/>
<rect x="1098.5" y="667.5" width="60" height="48" fill="#fff" stroke="#000" stroke-width="1" shape-rendering="crispEdges"/>
<rect x="1128" y="691" width="1" height="1" fill="#000"/><rect x="1112.5" y="675.5" width="32" height="32" stroke="#000" stroke-width="1" fill="none" shape-rendering="crispEdges"/>
<rect x="1173.5" y="667.5" width="60" height="48" fill="#fff" stroke="#000" stroke-width="1" shape-rendering="crispEdges"/>
<rect x="1187.5" y="675.5" width="32" height="32" stroke="#000" stroke-width="1" fill="none" shape-rendering="crispEdges"/>
<rect x="1248.5" y="667.5" width="60" height="48" fill="#fff" stroke="#000" stroke-width="1" shape-rendering="crispEdges"/>
<path d="M1262.5 691.5 h32 M1278.5 675.5 v32" stroke="#000" stroke-width="1" fill="none" shape-rendering="crispEdges"/><rect x="1262.5" y="675.5" width="32" height="32" stroke="#000" stroke-width="1" fill="none" shape-rendering="crispEdges"/>
<rect x="1323.5" y="667.5" width="60" height="48" fill="#fff" stroke="#000" stroke-width="1" shape-rendering="crispEdges"/>
<path d="M1337.5 675.5 l32 32 M1369.5 675.5 l-32 32" stroke="#000" stroke-width="1" fill="none"/><rect x="1337.5" y="675.5" width="32" height="32" stroke="#000" stroke-width="1" fill="none" shape-rendering="crispEdges"/>
<rect x="1398.5" y="667.5" width="60" height="48" fill="#fff" stroke="#000" stroke-width="1" shape-rendering="crispEdges"/>
<path d="M1428.5 678.5 v13" stroke="#000" stroke-width="1" fill="none" shape-rendering="crispEdges"/><rect x="1412.5" y="675.5" width="32" height="32" stroke="#000" stroke-width="1" fill="none" shape-rendering="crispEdges"/>
<rect x="1098.5" y="726.5" width="60" height="48" fill="#fff" stroke="#000" stroke-width="1" shape-rendering="crispEdges"/>
<rect x="1128" y="750" width="1" height="1" fill="#000"/><circle cx="1128.5" cy="750.5" r="16" stroke="#000" stroke-width="1" fill="none"/><rect x="1112.5" y="734.5" width="32" height="32" stroke="#000" stroke-width="1" fill="none" shape-rendering="crispEdges"/>
<rect x="1173.5" y="726.5" width="60" height="48" fill="#fff" stroke="#000" stroke-width="1" shape-rendering="crispEdges"/>
<circle cx="1203.5" cy="750.5" r="16" stroke="#000" stroke-width="1" fill="none"/><rect x="1187.5" y="734.5" width="32" height="32" stroke="#000" stroke-width="1" fill="none" shape-rendering="crispEdges"/>
<rect x="1248.5" y="726.5" width="60" height="48" fill="#fff" stroke="#000" stroke-width="1" shape-rendering="crispEdges"/>
<path d="M1262.5 750.5 h32 M1278.5 734.5 v32" stroke="#000" stroke-width="1" fill="none" shape-rendering="crispEdges"/><circle cx="1278.5" cy="750.5" r="16" stroke="#000" stroke-width="1" fill="none"/><rect x="1262.5" y="734.5" width="32" height="32" stroke="#000" stroke-width="1" fill="none" shape-rendering="crispEdges"/>
<rect x="1323.5" y="726.5" width="60" height="48" fill="#fff" stroke="#000" stroke-width="1" shape-rendering="crispEdges"/>
<path d="M1337.5 734.5 l32 32 M1369.5 734.5 l-32 32" stroke="#000" stroke-width="1" fill="none"/><circle cx="1353.5" cy="750.5" r="16" stroke="#000" stroke-width="1" fill="none"/><rect x="1337.5" y="734.5" width="32" height="32" stroke="#000" stroke-width="1" fill="none" shape-rendering="crispEdges"/>
<rect x="1398.5" y="726.5" width="60" height="48" fill="#fff" stroke="#000" stroke-width="1" shape-rendering="crispEdges"/>
<path d="M1428.5 737.5 v13" stroke="#000" stroke-width="1" fill="none" shape-rendering="crispEdges"/><circle cx="1428.5" cy="750.5" r="16" stroke="#000" stroke-width="1" fill="none"/><rect x="1412.5" y="734.5" width="32" height="32" stroke="#000" stroke-width="1" fill="none" shape-rendering="crispEdges"/>
<circle cx="1117" cy="913.2" r="10" fill="#0563bf"/><circle cx="1117" cy="913.2" r="4.6" fill="#fff"/>
<circle cx="1117" cy="943" r="9.5" fill="#f6f6f6" stroke="#5a5a5a" stroke-width="1"/>
</svg>
</div>
</div>
</body></html>
